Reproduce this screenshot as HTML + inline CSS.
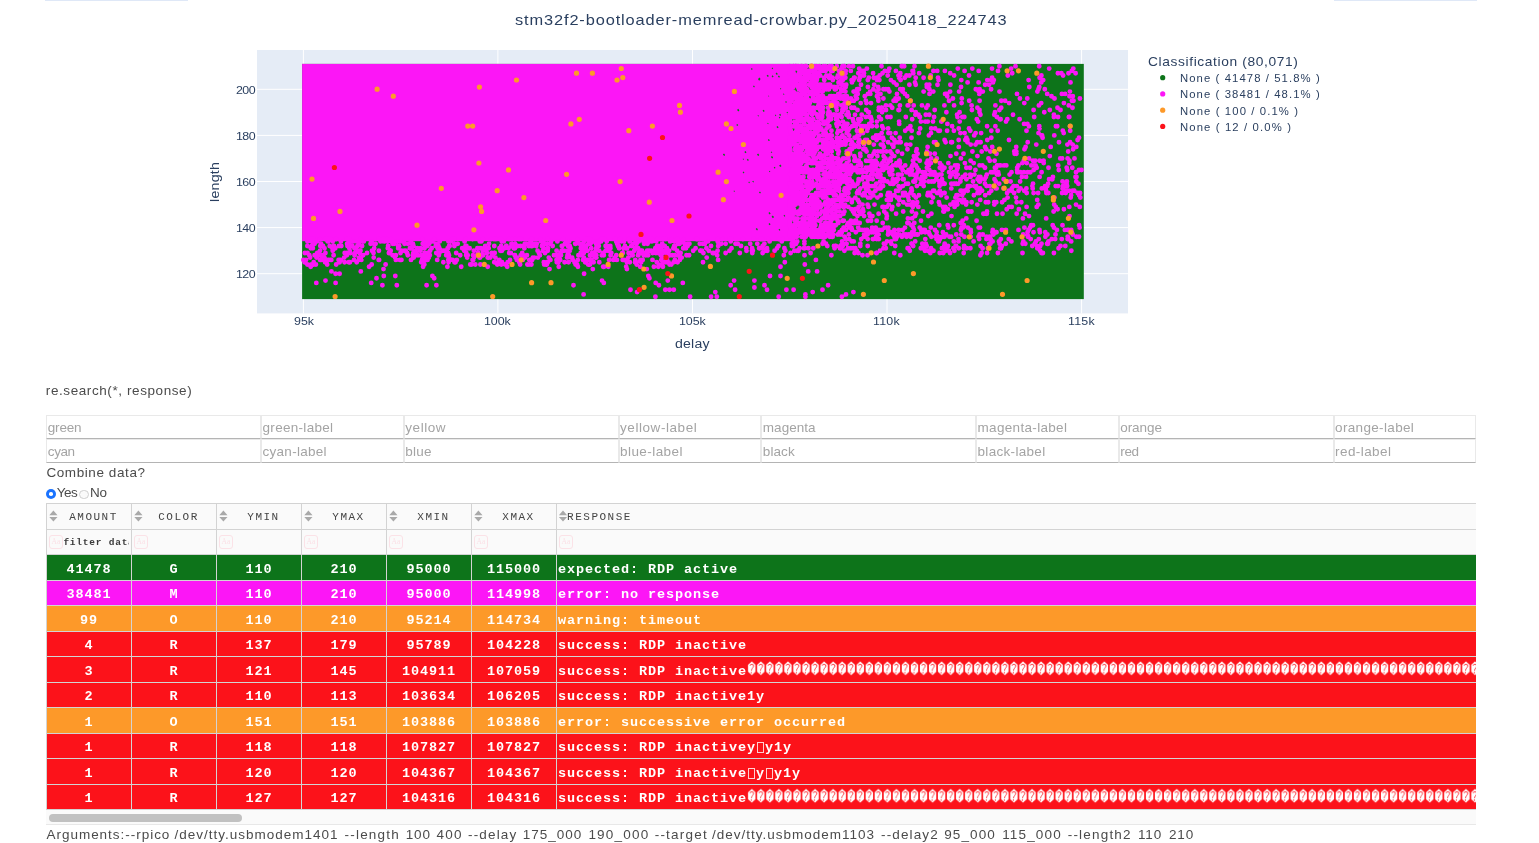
<!DOCTYPE html>
<html><head><meta charset="utf-8"><title>glitch analysis</title>
<style>
html,body{margin:0;padding:0;background:#fff}
body{will-change:transform;width:1539px;height:843px;position:relative;overflow:hidden;font-family:"Liberation Sans",sans-serif}
.abs{position:absolute}
.inp{position:absolute;box-sizing:border-box;background:#fff;border:1px solid #e9e9e9;border-bottom-color:#b4b4b4}
.hl{position:absolute;height:1px;background:#d3d3d3}
.vl{position:absolute;width:1px;background:#d3d3d3}
.c{position:absolute;white-space:pre;color:#fff;font:700 13.5px/15px "Liberation Mono",monospace;letter-spacing:.9px;text-align:center;width:85px}
.r{position:absolute;white-space:pre;color:#fff;font:700 13.5px/15px "Liberation Mono",monospace;letter-spacing:.9px;left:512px}
.h{position:absolute;white-space:pre;color:#444;font:400 11px/12px "Liberation Mono",monospace;letter-spacing:1.5px;text-align:center}
.bx{display:inline-block;box-sizing:border-box;width:6.5px;height:10.5px;border:1px solid rgba(255,255,255,.8);margin:0 1.25px 0 1.25px;vertical-align:-1.5px;letter-spacing:0}
</style></head><body>

<div class="abs" style="left:45px;top:0;width:143px;height:1px;background:#dfe8f7"></div>
<div class="abs" style="left:1334px;top:0;width:143px;height:1px;background:#dfe8f7"></div>
<svg class="abs" style="left:0;top:0" width="1539" height="370" viewBox="0 0 1539 370">
<rect x="257" y="50" width="871" height="263.4" fill="#e5ecf6"/>
<path d="M303.4 50V313.4M497.9 50V313.4M692.5 50V313.4M887.0 50V313.4M1081.6 50V313.4M257 273.7H1128M257 227.6H1128M257 181.5H1128M257 135.4H1128M257 89.3H1128" stroke="#fff" stroke-width="1" fill="none"/>
<rect x="302.1" y="63.9" width="781.7" height="235.2" fill="#0d741a"/>
<rect x="302.1" y="63.9" width="489.9" height="177.3" fill="#fc16f6"/>
<path d="M788.4 114.4m-1.0 0l1.0 -1.0l1.0 1.2l-0.8 1.0zM772.8 216.7m-1.2 0l1.2 -1.2l1.2 1.5l-1.0 1.2zM772.4 68.4m-0.8 0l0.8 -0.8l0.8 0.9l-0.6 0.8zM758.1 154.7m-1.2 0l1.2 -1.2l1.2 1.4l-0.9 1.2zM771.5 152.2m-0.8 0l0.8 -0.8l0.8 0.9l-0.6 0.8zM745.4 152.0m-1.1 0l1.1 -1.1l1.1 1.3l-0.9 1.1zM778.9 76.6m-1.0 0l1.0 -1.0l1.0 1.2l-0.8 1.0zM759.1 79.4m-1.1 0l1.1 -1.1l1.1 1.3l-0.9 1.1zM759.4 78.8m-1.2 0l1.2 -1.2l1.2 1.4l-1.0 1.2zM768.8 140.1m-1.0 0l1.0 -1.0l1.0 1.1l-0.8 1.0zM763.6 110.8m-1.1 0l1.1 -1.1l1.1 1.3l-0.9 1.1zM779.4 229.7m-0.9 0l0.9 -0.9l0.9 1.1l-0.7 0.9zM724.0 154.6m-1.2 0l1.2 -1.2l1.2 1.5l-1.0 1.2zM774.6 167.6m-0.9 0l0.9 -0.9l0.9 1.1l-0.7 0.9zM756.8 229.1m-1.1 0l1.1 -1.1l1.1 1.3l-0.8 1.1zM780.6 88.7m-0.7 0l0.7 -0.7l0.7 0.8l-0.5 0.7zM753.9 86.3m-0.9 0l0.9 -0.9l0.9 1.1l-0.7 0.9zM753.1 181.6m-0.9 0l0.9 -0.9l0.9 1.0l-0.7 0.9zM779.6 117.5m-0.8 0l0.8 -0.8l0.8 1.0l-0.6 0.8zM780.3 165.7m-1.2 0l1.2 -1.2l1.2 1.4l-1.0 1.2zM743.3 159.1m-0.7 0l0.7 -0.7l0.7 0.8l-0.6 0.7zM769.5 213.1m-1.1 0l1.1 -1.1l1.1 1.4l-0.9 1.1zM772.6 76.2m-1.0 0l1.0 -1.0l1.0 1.2l-0.8 1.0zM780.7 195.3m-1.1 0l1.1 -1.1l1.1 1.4l-0.9 1.1zM775.6 115.3m-0.7 0l0.7 -0.7l0.7 0.9l-0.6 0.7zM758.2 115.8m-0.7 0l0.7 -0.7l0.7 0.8l-0.6 0.7zM747.8 159.7m-1.0 0l1.0 -1.0l1.0 1.2l-0.8 1.0zM780.1 114.8m-1.0 0l1.0 -1.0l1.0 1.2l-0.8 1.0zM743.5 172.3m-0.9 0l0.9 -0.9l0.9 1.1l-0.7 0.9zM767.9 123.4m-0.7 0l0.7 -0.7l0.7 0.8l-0.5 0.7zM784.4 215.7m-0.9 0l0.9 -0.9l0.9 1.1l-0.7 0.9zM772.0 157.1m-1.2 0l1.2 -1.2l1.2 1.5l-1.0 1.2zM776.7 73.6m-1.1 0l1.1 -1.1l1.1 1.4l-0.9 1.1zM767.7 75.8m-1.1 0l1.1 -1.1l1.1 1.3l-0.9 1.1zM768.7 96.1m-0.5 0l0.5 -0.5l0.5 0.7l-0.4 0.5zM737.2 124.9m-1.0 0l1.0 -1.0l1.0 1.2l-0.8 1.0zM783.7 94.1m-0.7 0l0.7 -0.7l0.7 0.8l-0.5 0.7zM759.9 192.4m-1.0 0l1.0 -1.0l1.0 1.2l-0.8 1.0zM769.6 171.5m-0.7 0l0.7 -0.7l0.7 0.8l-0.5 0.7zM749.1 182.2m-0.8 0l0.8 -0.8l0.8 1.0l-0.7 0.8zM734.2 191.1m-0.7 0l0.7 -0.7l0.7 0.8l-0.6 0.7zM777.5 127.0m-1.1 0l1.1 -1.1l1.1 1.3l-0.8 1.1zM769.5 224.1m-1.0 0l1.0 -1.0l1.0 1.2l-0.8 1.0zM751.8 68.9m-0.9 0l0.9 -0.9l0.9 1.1l-0.8 0.9zM744.0 143.4m-0.6 0l0.6 -0.6l0.6 0.8l-0.5 0.6zM787.3 112.5m-0.8 0l0.8 -0.8l0.8 1.0l-0.7 0.8zM786.0 101.9m-0.8 0l0.8 -0.8l0.8 1.0l-0.7 0.8zM738.2 110.0m-1.2 0l1.2 -1.2l1.2 1.4l-0.9 1.2z" fill="#0d741a"/>
<path d="M791.6 236.8h0M791.9 236.8h0M790.3 236.8h0M794.8 236.8h0M793.9 236.8h0M796.8 236.8h0M801.5 236.8h0M801.6 236.8h0M803.7 236.8h0M801.8 236.8h0M805.7 236.8h0M811.6 236.8h0M812.1 236.8h0M814.7 236.8h0M817.5 236.8h0M818.5 236.8h0M818.7 236.8h0M817.8 236.8h0M825.4 236.8h0M824.9 236.8h0M821.6 236.8h0M829.8 236.8h0M832.1 236.8h0M832.7 236.8h0M844.6 236.8h0M863.8 236.8h0M876.1 236.8h0M897.1 236.8h0M894.4 236.8h0M902.0 236.8h0M906.6 236.8h0M910.7 236.8h0M931.4 236.8h0M935.8 236.8h0M938.2 236.8h0M942.3 236.8h0M944.5 236.8h0M949.4 236.8h0M951.2 236.8h0M964.4 236.8h0M970.7 236.8h0M978.5 236.8h0M986.7 236.8h0M989.6 236.8h0M1028.3 236.8h0M1027.9 236.8h0M1045.4 236.8h0M1067.7 236.8h0M1076.4 236.8h0M1079.0 236.8h0M791.1 234.5h0M791.9 234.5h0M792.0 234.5h0M789.9 234.5h0M792.1 234.5h0M793.5 234.5h0M795.3 234.5h0M796.9 234.5h0M793.9 234.5h0M796.6 234.5h0M804.3 234.5h0M803.5 234.5h0M805.6 234.5h0M806.8 234.5h0M810.2 234.5h0M816.2 234.5h0M814.3 234.5h0M815.3 234.5h0M816.8 234.5h0M818.8 234.5h0M818.1 234.5h0M819.5 234.5h0M822.2 234.5h0M823.4 234.5h0M822.7 234.5h0M822.4 234.5h0M826.8 234.5h0M828.9 234.5h0M829.7 234.5h0M833.0 234.5h0M840.7 234.5h0M837.6 234.5h0M848.9 234.5h0M864.1 234.5h0M866.3 234.5h0M867.5 234.5h0M866.3 234.5h0M878.6 234.5h0M888.0 234.5h0M892.7 234.5h0M897.3 234.5h0M899.4 234.5h0M903.8 234.5h0M905.1 234.5h0M908.2 234.5h0M906.4 234.5h0M912.4 234.5h0M910.4 234.5h0M916.7 234.5h0M914.8 234.5h0M917.2 234.5h0M917.9 234.5h0M929.7 234.5h0M936.7 234.5h0M946.1 234.5h0M956.3 234.5h0M961.3 234.5h0M979.6 234.5h0M982.8 234.5h0M993.0 234.5h0M993.4 234.5h0M1023.2 234.5h0M1027.5 234.5h0M1047.4 234.5h0M1046.1 234.5h0M1055.5 234.5h0M1072.7 234.5h0M792.0 232.2h0M790.0 232.2h0M795.6 232.2h0M799.7 232.2h0M803.7 232.2h0M802.2 232.2h0M808.1 232.2h0M812.5 232.2h0M812.8 232.2h0M813.2 232.2h0M810.8 232.2h0M817.5 232.2h0M817.1 232.2h0M822.6 232.2h0M831.2 232.2h0M832.3 232.2h0M829.6 232.2h0M839.6 232.2h0M840.6 232.2h0M839.6 232.2h0M841.8 232.2h0M855.8 232.2h0M869.8 232.2h0M873.4 232.2h0M871.4 232.2h0M875.4 232.2h0M888.4 232.2h0M891.4 232.2h0M894.3 232.2h0M913.0 232.2h0M912.1 232.2h0M921.5 232.2h0M925.2 232.2h0M928.8 232.2h0M936.6 232.2h0M936.6 232.2h0M942.9 232.2h0M970.9 232.2h0M992.4 232.2h0M996.0 232.2h0M996.5 232.2h0M1027.6 232.2h0M1033.5 232.2h0M1039.9 232.2h0M1045.3 232.2h0M1071.7 232.2h0M792.4 229.9h0M790.7 229.9h0M798.2 229.9h0M805.5 229.9h0M805.3 229.9h0M801.8 229.9h0M805.2 229.9h0M807.6 229.9h0M809.3 229.9h0M808.4 229.9h0M812.0 229.9h0M811.4 229.9h0M810.4 229.9h0M809.8 229.9h0M815.3 229.9h0M819.9 229.9h0M819.2 229.9h0M822.0 229.9h0M825.1 229.9h0M824.7 229.9h0M824.0 229.9h0M823.0 229.9h0M827.8 229.9h0M830.5 229.9h0M833.5 229.9h0M833.2 229.9h0M833.8 229.9h0M842.0 229.9h0M845.9 229.9h0M852.1 229.9h0M858.9 229.9h0M862.0 229.9h0M864.8 229.9h0M867.2 229.9h0M866.6 229.9h0M872.2 229.9h0M875.7 229.9h0M879.0 229.9h0M877.9 229.9h0M881.9 229.9h0M888.3 229.9h0M894.4 229.9h0M898.8 229.9h0M902.7 229.9h0M914.0 229.9h0M921.2 229.9h0M924.8 229.9h0M922.8 229.9h0M935.0 229.9h0M935.0 229.9h0M960.9 229.9h0M970.7 229.9h0M992.8 229.9h0M1001.9 229.9h0M1005.9 229.9h0M1018.5 229.9h0M1028.6 229.9h0M1039.5 229.9h0M1056.9 229.9h0M1064.9 229.9h0M1067.6 229.9h0M1068.4 229.9h0M1071.2 229.9h0M790.7 227.6h0M794.8 227.6h0M801.8 227.6h0M803.4 227.6h0M806.0 227.6h0M806.3 227.6h0M812.4 227.6h0M814.3 227.6h0M820.6 227.6h0M824.8 227.6h0M829.1 227.6h0M833.4 227.6h0M831.5 227.6h0M843.7 227.6h0M843.6 227.6h0M849.6 227.6h0M851.4 227.6h0M858.2 227.6h0M858.2 227.6h0M872.1 227.6h0M875.7 227.6h0M884.8 227.6h0M886.6 227.6h0M888.4 227.6h0M905.0 227.6h0M913.2 227.6h0M919.7 227.6h0M930.8 227.6h0M948.3 227.6h0M961.6 227.6h0M963.1 227.6h0M967.8 227.6h0M980.0 227.6h0M978.7 227.6h0M1024.4 227.6h0M1030.1 227.6h0M1053.9 227.6h0M1079.6 227.6h0M791.2 225.3h0M789.6 225.3h0M791.2 225.3h0M794.9 225.3h0M794.9 225.3h0M796.2 225.3h0M794.0 225.3h0M795.1 225.3h0M800.6 225.3h0M801.2 225.3h0M799.7 225.3h0M799.0 225.3h0M804.4 225.3h0M809.3 225.3h0M808.1 225.3h0M806.3 225.3h0M805.9 225.3h0M812.3 225.3h0M815.4 225.3h0M814.0 225.3h0M821.2 225.3h0M822.6 225.3h0M825.2 225.3h0M828.8 225.3h0M826.7 225.3h0M829.1 225.3h0M835.7 225.3h0M833.9 225.3h0M848.2 225.3h0M848.5 225.3h0M847.1 225.3h0M849.6 225.3h0M911.4 225.3h0M939.2 225.3h0M939.3 225.3h0M947.7 225.3h0M953.8 225.3h0M963.9 225.3h0M1033.0 225.3h0M1031.2 225.3h0M1052.7 225.3h0M1062.5 225.3h0M1079.1 225.3h0M789.7 223.0h0M797.3 223.0h0M797.5 223.0h0M798.7 223.0h0M804.9 223.0h0M803.0 223.0h0M809.1 223.0h0M810.3 223.0h0M813.1 223.0h0M825.2 223.0h0M828.3 223.0h0M829.3 223.0h0M830.4 223.0h0M838.3 223.0h0M848.2 223.0h0M849.1 223.0h0M850.8 223.0h0M856.1 223.0h0M853.9 223.0h0M859.7 223.0h0M882.7 223.0h0M907.4 223.0h0M908.6 223.0h0M914.3 223.0h0M960.7 223.0h0M789.7 220.7h0M794.6 220.7h0M795.9 220.7h0M802.6 220.7h0M811.2 220.7h0M811.0 220.7h0M810.4 220.7h0M815.5 220.7h0M819.4 220.7h0M820.5 220.7h0M831.1 220.7h0M837.7 220.7h0M842.6 220.7h0M843.8 220.7h0M842.5 220.7h0M850.9 220.7h0M855.2 220.7h0M856.1 220.7h0M867.9 220.7h0M871.1 220.7h0M876.7 220.7h0M921.0 220.7h0M962.6 220.7h0M976.6 220.7h0M791.1 218.4h0M793.0 218.4h0M794.9 218.4h0M797.6 218.4h0M804.2 218.4h0M805.2 218.4h0M802.4 218.4h0M804.3 218.4h0M808.1 218.4h0M805.9 218.4h0M807.3 218.4h0M811.1 218.4h0M814.7 218.4h0M822.2 218.4h0M825.9 218.4h0M830.2 218.4h0M836.4 218.4h0M833.6 218.4h0M886.6 218.4h0M907.9 218.4h0M912.1 218.4h0M966.3 218.4h0M1022.9 218.4h0M1046.2 218.4h0M791.6 216.1h0M811.4 216.1h0M817.0 216.1h0M817.0 216.1h0M824.7 216.1h0M828.4 216.1h0M826.9 216.1h0M832.9 216.1h0M836.4 216.1h0M836.0 216.1h0M839.1 216.1h0M840.2 216.1h0M857.4 216.1h0M864.1 216.1h0M872.4 216.1h0M870.0 216.1h0M886.9 216.1h0M915.1 216.1h0M928.3 216.1h0M951.5 216.1h0M1029.0 216.1h0M1069.5 216.1h0M793.8 213.8h0M799.6 213.8h0M797.6 213.8h0M803.7 213.8h0M804.8 213.8h0M808.6 213.8h0M809.5 213.8h0M806.0 213.8h0M809.4 213.8h0M813.2 213.8h0M809.6 213.8h0M815.1 213.8h0M819.0 213.8h0M820.1 213.8h0M825.2 213.8h0M826.9 213.8h0M832.5 213.8h0M834.0 213.8h0M834.1 213.8h0M843.6 213.8h0M854.4 213.8h0M860.6 213.8h0M869.4 213.8h0M878.6 213.8h0M886.3 213.8h0M896.1 213.8h0M916.1 213.8h0M931.4 213.8h0M983.4 213.8h0M986.8 213.8h0M997.0 213.8h0M1002.5 213.8h0M1016.7 213.8h0M1025.0 213.8h0M791.0 211.5h0M790.0 211.5h0M789.7 211.5h0M790.9 211.5h0M793.0 211.5h0M794.3 211.5h0M801.5 211.5h0M798.4 211.5h0M800.1 211.5h0M801.1 211.5h0M804.2 211.5h0M806.9 211.5h0M812.0 211.5h0M812.3 211.5h0M822.0 211.5h0M825.3 211.5h0M826.3 211.5h0M830.8 211.5h0M831.2 211.5h0M830.1 211.5h0M836.8 211.5h0M839.6 211.5h0M844.4 211.5h0M853.0 211.5h0M861.3 211.5h0M859.1 211.5h0M863.3 211.5h0M884.3 211.5h0M903.2 211.5h0M911.9 211.5h0M923.0 211.5h0M944.1 211.5h0M943.4 211.5h0M968.9 211.5h0M968.1 211.5h0M968.4 211.5h0M971.4 211.5h0M987.0 211.5h0M1053.6 211.5h0M793.9 209.2h0M800.7 209.2h0M801.8 209.2h0M807.8 209.2h0M813.0 209.2h0M810.2 209.2h0M817.0 209.2h0M817.4 209.2h0M815.2 209.2h0M827.7 209.2h0M825.7 209.2h0M826.0 209.2h0M832.1 209.2h0M835.2 209.2h0M851.5 209.2h0M855.6 209.2h0M857.2 209.2h0M855.1 209.2h0M863.0 209.2h0M891.7 209.2h0M943.9 209.2h0M947.9 209.2h0M1006.7 209.2h0M1018.9 209.2h0M1057.6 209.2h0M1063.9 209.2h0M790.0 206.9h0M790.8 206.9h0M792.5 206.9h0M802.0 206.9h0M802.8 206.9h0M805.4 206.9h0M807.2 206.9h0M807.7 206.9h0M813.0 206.9h0M815.3 206.9h0M820.3 206.9h0M819.1 206.9h0M820.7 206.9h0M827.9 206.9h0M834.9 206.9h0M839.1 206.9h0M843.9 206.9h0M843.5 206.9h0M848.3 206.9h0M858.6 206.9h0M868.4 206.9h0M883.5 206.9h0M882.5 206.9h0M886.8 206.9h0M892.3 206.9h0M912.8 206.9h0M918.3 206.9h0M943.0 206.9h0M945.4 206.9h0M954.6 206.9h0M1009.0 206.9h0M1011.7 206.9h0M1026.6 206.9h0M1036.7 206.9h0M1055.8 206.9h0M1069.3 206.9h0M1079.8 206.9h0M792.2 204.6h0M789.8 204.6h0M789.7 204.6h0M793.9 204.6h0M795.7 204.6h0M794.3 204.6h0M795.7 204.6h0M795.0 204.6h0M800.4 204.6h0M803.5 204.6h0M803.8 204.6h0M806.8 204.6h0M806.9 204.6h0M811.5 204.6h0M811.9 204.6h0M812.3 204.6h0M812.0 204.6h0M812.0 204.6h0M813.3 204.6h0M809.9 204.6h0M814.0 204.6h0M817.0 204.6h0M817.7 204.6h0M824.6 204.6h0M824.8 204.6h0M821.6 204.6h0M830.9 204.6h0M830.9 204.6h0M829.6 204.6h0M835.9 204.6h0M840.2 204.6h0M845.1 204.6h0M862.5 204.6h0M867.6 204.6h0M874.5 204.6h0M888.7 204.6h0M898.4 204.6h0M907.0 204.6h0M910.1 204.6h0M912.7 204.6h0M916.7 204.6h0M939.5 204.6h0M950.4 204.6h0M954.9 204.6h0M957.3 204.6h0M966.1 204.6h0M977.3 204.6h0M994.3 204.6h0M1038.4 204.6h0M1054.2 204.6h0M1076.0 204.6h0M792.6 202.2h0M791.2 202.2h0M789.8 202.2h0M796.5 202.2h0M798.4 202.2h0M802.3 202.2h0M801.6 202.2h0M802.8 202.2h0M811.0 202.2h0M815.0 202.2h0M817.1 202.2h0M819.4 202.2h0M818.9 202.2h0M825.3 202.2h0M827.6 202.2h0M829.5 202.2h0M832.4 202.2h0M841.3 202.2h0M851.8 202.2h0M859.1 202.2h0M903.3 202.2h0M912.9 202.2h0M917.2 202.2h0M931.5 202.2h0M938.9 202.2h0M953.5 202.2h0M956.7 202.2h0M962.3 202.2h0M966.5 202.2h0M971.6 202.2h0M985.8 202.2h0M988.2 202.2h0M994.3 202.2h0M996.3 202.2h0M1002.1 202.2h0M1016.7 202.2h0M1021.3 202.2h0M793.4 199.9h0M792.0 199.9h0M793.4 199.9h0M792.6 199.9h0M790.9 199.9h0M793.7 199.9h0M797.0 199.9h0M798.3 199.9h0M799.9 199.9h0M798.5 199.9h0M801.8 199.9h0M807.2 199.9h0M807.2 199.9h0M806.5 199.9h0M811.3 199.9h0M812.3 199.9h0M815.7 199.9h0M817.5 199.9h0M815.7 199.9h0M814.3 199.9h0M816.6 199.9h0M828.4 199.9h0M832.6 199.9h0M835.3 199.9h0M834.0 199.9h0M837.8 199.9h0M838.6 199.9h0M840.3 199.9h0M843.3 199.9h0M847.2 199.9h0M852.0 199.9h0M857.8 199.9h0M887.9 199.9h0M886.8 199.9h0M890.8 199.9h0M899.2 199.9h0M908.7 199.9h0M959.1 199.9h0M963.2 199.9h0M964.2 199.9h0M980.2 199.9h0M1004.4 199.9h0M1037.2 199.9h0M792.7 197.6h0M790.8 197.6h0M792.5 197.6h0M795.5 197.6h0M794.2 197.6h0M796.1 197.6h0M799.2 197.6h0M798.1 197.6h0M800.0 197.6h0M805.4 197.6h0M803.0 197.6h0M804.6 197.6h0M812.9 197.6h0M811.1 197.6h0M815.7 197.6h0M822.8 197.6h0M825.0 197.6h0M826.3 197.6h0M839.5 197.6h0M840.3 197.6h0M848.4 197.6h0M848.3 197.6h0M855.4 197.6h0M868.0 197.6h0M870.4 197.6h0M877.4 197.6h0M890.2 197.6h0M891.0 197.6h0M897.1 197.6h0M899.0 197.6h0M908.3 197.6h0M915.9 197.6h0M933.0 197.6h0M946.6 197.6h0M955.4 197.6h0M1007.6 197.6h0M1016.0 197.6h0M1054.4 197.6h0M1070.7 197.6h0M1080.3 197.6h0M793.1 195.3h0M793.5 195.3h0M793.2 195.3h0M794.5 195.3h0M801.0 195.3h0M799.6 195.3h0M801.5 195.3h0M806.1 195.3h0M811.8 195.3h0M813.3 195.3h0M815.9 195.3h0M814.2 195.3h0M819.3 195.3h0M819.7 195.3h0M818.9 195.3h0M822.4 195.3h0M824.2 195.3h0M835.8 195.3h0M834.0 195.3h0M840.8 195.3h0M841.7 195.3h0M844.7 195.3h0M862.6 195.3h0M864.9 195.3h0M873.3 195.3h0M880.8 195.3h0M887.5 195.3h0M890.7 195.3h0M894.3 195.3h0M894.5 195.3h0M904.1 195.3h0M903.1 195.3h0M904.4 195.3h0M907.5 195.3h0M913.7 195.3h0M918.9 195.3h0M927.6 195.3h0M927.5 195.3h0M930.5 195.3h0M941.0 195.3h0M956.5 195.3h0M957.8 195.3h0M962.2 195.3h0M973.9 195.3h0M985.2 195.3h0M1071.1 195.3h0M1079.1 195.3h0M790.7 193.0h0M797.2 193.0h0M794.3 193.0h0M795.1 193.0h0M801.5 193.0h0M800.5 193.0h0M803.9 193.0h0M805.1 193.0h0M805.5 193.0h0M804.9 193.0h0M807.2 193.0h0M807.8 193.0h0M816.1 193.0h0M820.0 193.0h0M827.0 193.0h0M828.3 193.0h0M826.3 193.0h0M831.8 193.0h0M833.6 193.0h0M845.5 193.0h0M848.4 193.0h0M857.0 193.0h0M859.1 193.0h0M858.8 193.0h0M864.3 193.0h0M872.0 193.0h0M870.2 193.0h0M888.2 193.0h0M889.9 193.0h0M905.0 193.0h0M903.0 193.0h0M910.5 193.0h0M928.0 193.0h0M930.0 193.0h0M937.1 193.0h0M941.0 193.0h0M944.6 193.0h0M944.1 193.0h0M963.6 193.0h0M977.5 193.0h0M979.4 193.0h0M989.2 193.0h0M1007.1 193.0h0M1014.1 193.0h0M1026.7 193.0h0M1033.6 193.0h0M1038.1 193.0h0M1048.3 193.0h0M1046.4 193.0h0M1062.1 193.0h0M1065.7 193.0h0M1077.7 193.0h0M1080.0 193.0h0M792.1 190.7h0M789.8 190.7h0M797.2 190.7h0M796.7 190.7h0M793.7 190.7h0M795.6 190.7h0M803.8 190.7h0M802.8 190.7h0M802.2 190.7h0M808.3 190.7h0M808.5 190.7h0M807.4 190.7h0M823.0 190.7h0M822.3 190.7h0M825.4 190.7h0M828.4 190.7h0M833.1 190.7h0M833.4 190.7h0M831.2 190.7h0M835.2 190.7h0M839.0 190.7h0M844.3 190.7h0M844.9 190.7h0M846.6 190.7h0M859.1 190.7h0M858.0 190.7h0M866.6 190.7h0M868.6 190.7h0M875.4 190.7h0M896.1 190.7h0M898.3 190.7h0M911.4 190.7h0M911.9 190.7h0M933.2 190.7h0M934.1 190.7h0M939.8 190.7h0M961.4 190.7h0M960.6 190.7h0M964.7 190.7h0M967.7 190.7h0M979.8 190.7h0M982.1 190.7h0M981.7 190.7h0M991.3 190.7h0M1008.9 190.7h0M1011.7 190.7h0M1018.6 190.7h0M1024.2 190.7h0M1046.1 190.7h0M1066.2 190.7h0M1068.9 190.7h0M1072.6 190.7h0M1074.0 190.7h0M1074.2 190.7h0M792.7 188.4h0M791.3 188.4h0M795.4 188.4h0M796.3 188.4h0M798.1 188.4h0M797.7 188.4h0M801.7 188.4h0M810.8 188.4h0M811.0 188.4h0M810.8 188.4h0M818.3 188.4h0M818.0 188.4h0M828.4 188.4h0M830.3 188.4h0M836.5 188.4h0M839.0 188.4h0M844.8 188.4h0M845.2 188.4h0M849.5 188.4h0M846.4 188.4h0M848.8 188.4h0M860.3 188.4h0M865.8 188.4h0M866.7 188.4h0M878.5 188.4h0M880.5 188.4h0M878.9 188.4h0M899.8 188.4h0M911.5 188.4h0M951.3 188.4h0M967.5 188.4h0M976.7 188.4h0M980.2 188.4h0M979.4 188.4h0M996.6 188.4h0M996.0 188.4h0M1003.5 188.4h0M1011.8 188.4h0M1020.5 188.4h0M1026.4 188.4h0M1032.7 188.4h0M1041.8 188.4h0M1045.7 188.4h0M1063.3 188.4h0M1062.6 188.4h0M790.5 186.1h0M791.4 186.1h0M792.1 186.1h0M792.0 186.1h0M790.9 186.1h0M793.5 186.1h0M793.9 186.1h0M797.7 186.1h0M798.5 186.1h0M802.0 186.1h0M805.4 186.1h0M805.4 186.1h0M806.6 186.1h0M807.7 186.1h0M808.2 186.1h0M806.8 186.1h0M813.4 186.1h0M817.4 186.1h0M820.5 186.1h0M820.9 186.1h0M820.9 186.1h0M817.7 186.1h0M817.8 186.1h0M820.5 186.1h0M824.3 186.1h0M824.2 186.1h0M824.3 186.1h0M825.8 186.1h0M830.4 186.1h0M831.4 186.1h0M832.3 186.1h0M833.6 186.1h0M838.5 186.1h0M849.2 186.1h0M853.0 186.1h0M855.0 186.1h0M854.9 186.1h0M864.3 186.1h0M868.8 186.1h0M869.4 186.1h0M869.6 186.1h0M872.0 186.1h0M875.0 186.1h0M873.6 186.1h0M881.0 186.1h0M880.6 186.1h0M881.5 186.1h0M883.1 186.1h0M898.6 186.1h0M902.8 186.1h0M916.8 186.1h0M923.7 186.1h0M939.5 186.1h0M967.9 186.1h0M969.0 186.1h0M970.1 186.1h0M974.2 186.1h0M975.8 186.1h0M976.0 186.1h0M986.6 186.1h0M989.8 186.1h0M994.4 186.1h0M1013.5 186.1h0M1016.8 186.1h0M1013.9 186.1h0M1032.4 186.1h0M1045.1 186.1h0M1047.3 186.1h0M1055.7 186.1h0M1058.0 186.1h0M1062.9 186.1h0M1067.2 186.1h0M789.6 183.8h0M794.2 183.8h0M793.7 183.8h0M796.0 183.8h0M796.0 183.8h0M798.4 183.8h0M798.1 183.8h0M809.4 183.8h0M806.8 183.8h0M809.7 183.8h0M812.0 183.8h0M816.4 183.8h0M820.9 183.8h0M822.2 183.8h0M827.0 183.8h0M829.2 183.8h0M825.8 183.8h0M826.7 183.8h0M835.0 183.8h0M834.4 183.8h0M840.2 183.8h0M847.3 183.8h0M852.8 183.8h0M857.6 183.8h0M864.4 183.8h0M866.3 183.8h0M867.5 183.8h0M876.3 183.8h0M893.5 183.8h0M890.2 183.8h0M892.5 183.8h0M893.6 183.8h0M906.0 183.8h0M908.1 183.8h0M920.8 183.8h0M922.8 183.8h0M939.5 183.8h0M941.2 183.8h0M942.9 183.8h0M941.8 183.8h0M944.6 183.8h0M951.3 183.8h0M954.6 183.8h0M956.0 183.8h0M953.8 183.8h0M956.3 183.8h0M958.1 183.8h0M985.0 183.8h0M999.2 183.8h0M1033.0 183.8h0M1048.1 183.8h0M1066.6 183.8h0M1065.7 183.8h0M1078.4 183.8h0M793.6 181.5h0M795.9 181.5h0M801.2 181.5h0M802.7 181.5h0M804.6 181.5h0M809.1 181.5h0M806.9 181.5h0M812.1 181.5h0M810.8 181.5h0M822.0 181.5h0M828.6 181.5h0M833.3 181.5h0M835.9 181.5h0M834.8 181.5h0M835.1 181.5h0M835.8 181.5h0M834.5 181.5h0M837.7 181.5h0M839.0 181.5h0M839.3 181.5h0M844.0 181.5h0M843.8 181.5h0M846.5 181.5h0M846.0 181.5h0M851.8 181.5h0M851.6 181.5h0M851.4 181.5h0M858.5 181.5h0M880.1 181.5h0M883.5 181.5h0M887.4 181.5h0M892.5 181.5h0M895.7 181.5h0M896.6 181.5h0M913.4 181.5h0M913.5 181.5h0M915.1 181.5h0M913.9 181.5h0M924.0 181.5h0M928.5 181.5h0M931.7 181.5h0M933.9 181.5h0M939.3 181.5h0M942.2 181.5h0M960.4 181.5h0M973.0 181.5h0M980.1 181.5h0M979.4 181.5h0M995.7 181.5h0M1006.8 181.5h0M1010.6 181.5h0M1020.1 181.5h0M1062.5 181.5h0M1066.9 181.5h0M1076.3 181.5h0M791.6 179.2h0M791.7 179.2h0M797.5 179.2h0M793.6 179.2h0M793.8 179.2h0M798.3 179.2h0M799.5 179.2h0M802.2 179.2h0M817.4 179.2h0M818.5 179.2h0M819.0 179.2h0M819.5 179.2h0M818.0 179.2h0M823.5 179.2h0M824.8 179.2h0M825.9 179.2h0M840.3 179.2h0M839.9 179.2h0M845.5 179.2h0M843.4 179.2h0M845.9 179.2h0M849.7 179.2h0M858.6 179.2h0M862.1 179.2h0M867.7 179.2h0M868.4 179.2h0M868.9 179.2h0M872.7 179.2h0M883.8 179.2h0M892.8 179.2h0M896.6 179.2h0M898.0 179.2h0M902.8 179.2h0M903.7 179.2h0M915.5 179.2h0M920.5 179.2h0M936.3 179.2h0M942.0 179.2h0M960.5 179.2h0M966.4 179.2h0M977.6 179.2h0M980.5 179.2h0M984.6 179.2h0M994.5 179.2h0M1003.7 179.2h0M1049.1 179.2h0M1052.3 179.2h0M1051.8 179.2h0M792.3 176.9h0M795.3 176.9h0M795.3 176.9h0M799.3 176.9h0M800.2 176.9h0M798.8 176.9h0M800.9 176.9h0M799.2 176.9h0M799.8 176.9h0M802.7 176.9h0M803.5 176.9h0M809.2 176.9h0M813.1 176.9h0M809.8 176.9h0M810.7 176.9h0M815.6 176.9h0M813.9 176.9h0M815.1 176.9h0M815.5 176.9h0M818.1 176.9h0M818.6 176.9h0M827.2 176.9h0M829.3 176.9h0M830.7 176.9h0M831.8 176.9h0M831.9 176.9h0M837.3 176.9h0M835.4 176.9h0M842.6 176.9h0M843.4 176.9h0M843.4 176.9h0M846.1 176.9h0M863.2 176.9h0M866.7 176.9h0M869.1 176.9h0M877.4 176.9h0M880.5 176.9h0M916.4 176.9h0M925.3 176.9h0M923.2 176.9h0M923.9 176.9h0M921.8 176.9h0M936.6 176.9h0M950.1 176.9h0M956.0 176.9h0M962.6 176.9h0M970.5 176.9h0M978.9 176.9h0M980.4 176.9h0M985.9 176.9h0M1021.9 176.9h0M1026.1 176.9h0M1039.6 176.9h0M1052.9 176.9h0M1076.5 176.9h0M1076.0 176.9h0M1075.5 176.9h0M790.7 174.6h0M790.0 174.6h0M796.7 174.6h0M795.6 174.6h0M797.6 174.6h0M810.0 174.6h0M811.3 174.6h0M812.0 174.6h0M811.2 174.6h0M812.2 174.6h0M815.5 174.6h0M815.3 174.6h0M818.5 174.6h0M823.5 174.6h0M827.1 174.6h0M828.6 174.6h0M825.7 174.6h0M827.4 174.6h0M826.6 174.6h0M832.3 174.6h0M829.9 174.6h0M832.2 174.6h0M835.2 174.6h0M834.3 174.6h0M834.3 174.6h0M840.0 174.6h0M840.9 174.6h0M845.4 174.6h0M850.2 174.6h0M873.4 174.6h0M871.2 174.6h0M876.1 174.6h0M880.5 174.6h0M890.0 174.6h0M892.5 174.6h0M897.9 174.6h0M899.0 174.6h0M901.7 174.6h0M909.9 174.6h0M912.9 174.6h0M916.6 174.6h0M913.6 174.6h0M926.2 174.6h0M929.9 174.6h0M933.0 174.6h0M933.9 174.6h0M936.5 174.6h0M939.6 174.6h0M941.5 174.6h0M951.9 174.6h0M957.1 174.6h0M957.7 174.6h0M965.4 174.6h0M970.2 174.6h0M974.4 174.6h0M986.8 174.6h0M996.9 174.6h0M998.7 174.6h0M1009.6 174.6h0M791.9 172.3h0M792.5 172.3h0M794.6 172.3h0M796.1 172.3h0M794.1 172.3h0M794.3 172.3h0M793.9 172.3h0M798.9 172.3h0M798.8 172.3h0M797.8 172.3h0M798.0 172.3h0M805.5 172.3h0M803.1 172.3h0M807.4 172.3h0M808.1 172.3h0M805.6 172.3h0M809.9 172.3h0M809.9 172.3h0M812.7 172.3h0M816.7 172.3h0M815.6 172.3h0M816.7 172.3h0M818.1 172.3h0M817.9 172.3h0M825.4 172.3h0M830.0 172.3h0M835.9 172.3h0M838.9 172.3h0M848.0 172.3h0M851.2 172.3h0M859.4 172.3h0M857.6 172.3h0M862.1 172.3h0M866.4 172.3h0M872.4 172.3h0M878.2 172.3h0M889.2 172.3h0M906.3 172.3h0M910.1 172.3h0M917.7 172.3h0M925.0 172.3h0M922.4 172.3h0M932.1 172.3h0M934.5 172.3h0M949.1 172.3h0M953.4 172.3h0M955.1 172.3h0M992.8 172.3h0M991.0 172.3h0M995.0 172.3h0M998.2 172.3h0M1011.5 172.3h0M1017.2 172.3h0M1020.5 172.3h0M1023.9 172.3h0M1027.7 172.3h0M1030.3 172.3h0M1041.6 172.3h0M1076.0 172.3h0M792.8 170.0h0M792.2 170.0h0M792.8 170.0h0M793.5 170.0h0M800.8 170.0h0M805.1 170.0h0M804.4 170.0h0M809.4 170.0h0M806.7 170.0h0M808.0 170.0h0M813.2 170.0h0M812.7 170.0h0M816.1 170.0h0M818.0 170.0h0M818.2 170.0h0M818.6 170.0h0M822.1 170.0h0M831.6 170.0h0M833.5 170.0h0M836.8 170.0h0M843.5 170.0h0M845.3 170.0h0M841.8 170.0h0M850.3 170.0h0M851.4 170.0h0M853.8 170.0h0M854.3 170.0h0M857.9 170.0h0M858.8 170.0h0M862.2 170.0h0M873.2 170.0h0M870.1 170.0h0M876.9 170.0h0M881.2 170.0h0M883.3 170.0h0M892.3 170.0h0M902.6 170.0h0M908.6 170.0h0M912.0 170.0h0M918.7 170.0h0M929.3 170.0h0M942.4 170.0h0M956.8 170.0h0M975.4 170.0h0M1017.1 170.0h0M1033.6 170.0h0M1033.7 170.0h0M1058.8 170.0h0M1067.3 170.0h0M1079.0 170.0h0M1081.5 170.0h0M797.5 167.7h0M796.0 167.7h0M793.7 167.7h0M794.4 167.7h0M797.4 167.7h0M801.3 167.7h0M798.7 167.7h0M800.6 167.7h0M805.2 167.7h0M804.9 167.7h0M806.9 167.7h0M806.8 167.7h0M817.4 167.7h0M818.6 167.7h0M820.6 167.7h0M823.3 167.7h0M827.1 167.7h0M833.5 167.7h0M830.6 167.7h0M837.2 167.7h0M840.8 167.7h0M845.1 167.7h0M848.4 167.7h0M847.8 167.7h0M852.8 167.7h0M855.8 167.7h0M856.4 167.7h0M867.3 167.7h0M868.8 167.7h0M865.9 167.7h0M873.4 167.7h0M872.1 167.7h0M875.2 167.7h0M885.5 167.7h0M885.9 167.7h0M887.2 167.7h0M887.5 167.7h0M886.0 167.7h0M890.5 167.7h0M901.3 167.7h0M902.2 167.7h0M911.5 167.7h0M917.2 167.7h0M926.9 167.7h0M939.8 167.7h0M944.5 167.7h0M950.8 167.7h0M957.7 167.7h0M966.4 167.7h0M970.0 167.7h0M985.0 167.7h0M984.9 167.7h0M996.1 167.7h0M994.9 167.7h0M1017.2 167.7h0M1036.7 167.7h0M1048.5 167.7h0M1066.7 167.7h0M1072.3 167.7h0M790.5 165.4h0M794.0 165.4h0M799.6 165.4h0M797.6 165.4h0M799.6 165.4h0M797.7 165.4h0M798.0 165.4h0M806.4 165.4h0M818.4 165.4h0M821.1 165.4h0M817.6 165.4h0M828.5 165.4h0M829.3 165.4h0M829.1 165.4h0M829.4 165.4h0M831.8 165.4h0M833.3 165.4h0M831.8 165.4h0M839.5 165.4h0M841.3 165.4h0M844.4 165.4h0M849.3 165.4h0M850.8 165.4h0M850.8 165.4h0M861.2 165.4h0M858.0 165.4h0M872.5 165.4h0M872.8 165.4h0M871.6 165.4h0M872.3 165.4h0M873.7 165.4h0M876.4 165.4h0M881.0 165.4h0M882.2 165.4h0M886.2 165.4h0M892.9 165.4h0M896.4 165.4h0M899.2 165.4h0M898.5 165.4h0M905.2 165.4h0M912.4 165.4h0M915.9 165.4h0M928.8 165.4h0M941.6 165.4h0M956.5 165.4h0M955.0 165.4h0M957.8 165.4h0M979.6 165.4h0M982.3 165.4h0M997.1 165.4h0M1000.5 165.4h0M999.6 165.4h0M1004.1 165.4h0M1006.3 165.4h0M1018.4 165.4h0M1031.3 165.4h0M1035.6 165.4h0M1034.1 165.4h0M1058.2 165.4h0M791.5 163.1h0M790.6 163.1h0M795.6 163.1h0M794.0 163.1h0M796.5 163.1h0M794.3 163.1h0M795.1 163.1h0M799.7 163.1h0M801.4 163.1h0M807.8 163.1h0M811.0 163.1h0M812.5 163.1h0M811.8 163.1h0M813.8 163.1h0M815.7 163.1h0M818.7 163.1h0M818.2 163.1h0M819.3 163.1h0M820.9 163.1h0M823.2 163.1h0M825.2 163.1h0M824.9 163.1h0M822.3 163.1h0M828.5 163.1h0M827.2 163.1h0M833.2 163.1h0M833.1 163.1h0M836.4 163.1h0M839.6 163.1h0M846.7 163.1h0M860.1 163.1h0M860.6 163.1h0M872.6 163.1h0M877.2 163.1h0M874.4 163.1h0M882.3 163.1h0M887.7 163.1h0M896.4 163.1h0M900.1 163.1h0M898.0 163.1h0M913.4 163.1h0M926.6 163.1h0M930.9 163.1h0M939.9 163.1h0M948.3 163.1h0M964.9 163.1h0M973.7 163.1h0M1022.4 163.1h0M1026.8 163.1h0M1043.7 163.1h0M1069.3 163.1h0M791.1 160.8h0M792.3 160.8h0M792.9 160.8h0M796.4 160.8h0M795.6 160.8h0M794.0 160.8h0M797.7 160.8h0M799.5 160.8h0M798.8 160.8h0M799.6 160.8h0M804.6 160.8h0M804.2 160.8h0M806.5 160.8h0M811.6 160.8h0M814.7 160.8h0M815.6 160.8h0M823.9 160.8h0M829.5 160.8h0M830.0 160.8h0M841.1 160.8h0M838.2 160.8h0M848.7 160.8h0M855.8 160.8h0M854.4 160.8h0M858.9 160.8h0M858.8 160.8h0M866.1 160.8h0M869.6 160.8h0M872.0 160.8h0M875.6 160.8h0M883.9 160.8h0M889.1 160.8h0M890.8 160.8h0M899.6 160.8h0M899.3 160.8h0M912.9 160.8h0M919.7 160.8h0M927.7 160.8h0M970.6 160.8h0M989.8 160.8h0M994.6 160.8h0M1023.8 160.8h0M1033.0 160.8h0M1035.2 160.8h0M1039.7 160.8h0M1043.6 160.8h0M1069.4 160.8h0M790.4 158.4h0M795.7 158.4h0M794.3 158.4h0M799.1 158.4h0M797.6 158.4h0M805.3 158.4h0M802.6 158.4h0M804.2 158.4h0M806.5 158.4h0M808.5 158.4h0M814.2 158.4h0M816.2 158.4h0M820.9 158.4h0M820.9 158.4h0M826.0 158.4h0M829.8 158.4h0M833.4 158.4h0M836.2 158.4h0M835.4 158.4h0M838.2 158.4h0M844.5 158.4h0M843.2 158.4h0M848.2 158.4h0M855.1 158.4h0M885.5 158.4h0M890.5 158.4h0M916.6 158.4h0M914.9 158.4h0M931.2 158.4h0M936.8 158.4h0M960.9 158.4h0M988.5 158.4h0M1029.0 158.4h0M1060.3 158.4h0M1060.3 158.4h0M1062.1 158.4h0M1067.6 158.4h0M1074.5 158.4h0M791.0 156.1h0M792.9 156.1h0M790.7 156.1h0M797.3 156.1h0M799.0 156.1h0M801.1 156.1h0M805.3 156.1h0M802.2 156.1h0M804.5 156.1h0M803.0 156.1h0M813.1 156.1h0M818.7 156.1h0M818.8 156.1h0M822.4 156.1h0M823.0 156.1h0M822.8 156.1h0M831.7 156.1h0M848.5 156.1h0M854.3 156.1h0M860.4 156.1h0M869.3 156.1h0M871.7 156.1h0M877.4 156.1h0M883.6 156.1h0M894.3 156.1h0M915.8 156.1h0M913.9 156.1h0M950.5 156.1h0M977.4 156.1h0M1049.8 156.1h0M791.6 153.8h0M789.7 153.8h0M796.1 153.8h0M795.6 153.8h0M795.5 153.8h0M798.3 153.8h0M800.9 153.8h0M799.3 153.8h0M797.6 153.8h0M800.5 153.8h0M798.1 153.8h0M798.6 153.8h0M801.2 153.8h0M802.6 153.8h0M808.3 153.8h0M808.4 153.8h0M810.2 153.8h0M814.2 153.8h0M819.9 153.8h0M827.6 153.8h0M825.7 153.8h0M838.3 153.8h0M846.8 153.8h0M846.7 153.8h0M850.1 153.8h0M860.2 153.8h0M873.6 153.8h0M891.7 153.8h0M902.1 153.8h0M917.6 153.8h0M926.6 153.8h0M930.0 153.8h0M934.8 153.8h0M956.3 153.8h0M963.5 153.8h0M996.5 153.8h0M1016.4 153.8h0M1014.6 153.8h0M790.2 151.5h0M796.2 151.5h0M795.8 151.5h0M799.6 151.5h0M798.6 151.5h0M798.7 151.5h0M806.5 151.5h0M809.5 151.5h0M813.3 151.5h0M812.4 151.5h0M815.3 151.5h0M826.4 151.5h0M831.2 151.5h0M831.7 151.5h0M838.8 151.5h0M846.7 151.5h0M866.5 151.5h0M874.6 151.5h0M877.8 151.5h0M880.9 151.5h0M882.7 151.5h0M886.3 151.5h0M890.3 151.5h0M897.6 151.5h0M916.2 151.5h0M927.0 151.5h0M972.4 151.5h0M981.7 151.5h0M990.4 151.5h0M1014.3 151.5h0M1016.3 151.5h0M1068.2 151.5h0M796.1 149.2h0M794.6 149.2h0M795.3 149.2h0M800.7 149.2h0M797.8 149.2h0M801.9 149.2h0M808.4 149.2h0M808.1 149.2h0M813.1 149.2h0M810.6 149.2h0M816.9 149.2h0M816.6 149.2h0M824.2 149.2h0M824.4 149.2h0M823.1 149.2h0M828.1 149.2h0M829.7 149.2h0M837.0 149.2h0M837.9 149.2h0M849.6 149.2h0M851.8 149.2h0M865.4 149.2h0M863.4 149.2h0M907.4 149.2h0M916.7 149.2h0M986.3 149.2h0M1024.5 149.2h0M1073.1 149.2h0M796.8 146.9h0M800.9 146.9h0M800.3 146.9h0M805.3 146.9h0M805.3 146.9h0M803.0 146.9h0M807.0 146.9h0M806.8 146.9h0M808.2 146.9h0M808.2 146.9h0M811.5 146.9h0M812.3 146.9h0M812.5 146.9h0M817.3 146.9h0M818.3 146.9h0M818.4 146.9h0M819.7 146.9h0M821.7 146.9h0M825.5 146.9h0M823.5 146.9h0M824.7 146.9h0M825.6 146.9h0M829.6 146.9h0M833.3 146.9h0M832.0 146.9h0M834.3 146.9h0M835.6 146.9h0M838.4 146.9h0M838.1 146.9h0M854.5 146.9h0M858.7 146.9h0M859.2 146.9h0M883.8 146.9h0M893.4 146.9h0M927.6 146.9h0M958.8 146.9h0M985.1 146.9h0M992.2 146.9h0M1016.2 146.9h0M1025.6 146.9h0M1050.7 146.9h0M1076.3 146.9h0M790.7 144.6h0M789.6 144.6h0M795.7 144.6h0M796.7 144.6h0M794.2 144.6h0M795.4 144.6h0M796.1 144.6h0M804.5 144.6h0M804.4 144.6h0M807.3 144.6h0M808.0 144.6h0M806.9 144.6h0M808.7 144.6h0M812.4 144.6h0M812.9 144.6h0M813.6 144.6h0M814.0 144.6h0M823.4 144.6h0M827.5 144.6h0M826.6 144.6h0M826.1 144.6h0M830.1 144.6h0M838.5 144.6h0M841.4 144.6h0M842.5 144.6h0M845.5 144.6h0M845.1 144.6h0M851.4 144.6h0M850.8 144.6h0M853.9 144.6h0M858.2 144.6h0M864.0 144.6h0M873.8 144.6h0M880.8 144.6h0M882.8 144.6h0M892.2 144.6h0M893.5 144.6h0M906.3 144.6h0M910.3 144.6h0M970.7 144.6h0M975.5 144.6h0M1036.3 144.6h0M1067.4 144.6h0M1072.6 144.6h0M790.4 142.3h0M790.7 142.3h0M790.6 142.3h0M793.5 142.3h0M800.8 142.3h0M804.2 142.3h0M804.5 142.3h0M808.7 142.3h0M809.0 142.3h0M806.2 142.3h0M813.1 142.3h0M812.8 142.3h0M810.4 142.3h0M813.2 142.3h0M812.8 142.3h0M814.2 142.3h0M816.8 142.3h0M823.1 142.3h0M823.2 142.3h0M826.5 142.3h0M826.3 142.3h0M828.0 142.3h0M832.5 142.3h0M835.2 142.3h0M833.6 142.3h0M841.1 142.3h0M845.0 142.3h0M843.2 142.3h0M845.8 142.3h0M845.7 142.3h0M852.0 142.3h0M858.4 142.3h0M862.0 142.3h0M869.1 142.3h0M868.4 142.3h0M888.1 142.3h0M895.5 142.3h0M900.7 142.3h0M898.7 142.3h0M934.0 142.3h0M935.6 142.3h0M945.6 142.3h0M952.0 142.3h0M951.1 142.3h0M967.5 142.3h0M977.2 142.3h0M980.6 142.3h0M1027.7 142.3h0M1059.0 142.3h0M1070.1 142.3h0M791.4 140.0h0M790.9 140.0h0M789.6 140.0h0M790.4 140.0h0M796.0 140.0h0M794.4 140.0h0M794.7 140.0h0M796.4 140.0h0M794.4 140.0h0M798.8 140.0h0M801.9 140.0h0M809.3 140.0h0M809.8 140.0h0M813.9 140.0h0M819.9 140.0h0M817.8 140.0h0M821.2 140.0h0M824.9 140.0h0M831.8 140.0h0M837.6 140.0h0M847.6 140.0h0M850.3 140.0h0M859.4 140.0h0M865.3 140.0h0M867.0 140.0h0M876.6 140.0h0M883.6 140.0h0M894.3 140.0h0M944.6 140.0h0M958.7 140.0h0M965.3 140.0h0M967.4 140.0h0M987.3 140.0h0M1009.0 140.0h0M1077.6 140.0h0M791.3 137.7h0M789.9 137.7h0M793.6 137.7h0M794.8 137.7h0M797.9 137.7h0M797.6 137.7h0M804.5 137.7h0M802.4 137.7h0M802.4 137.7h0M803.6 137.7h0M806.7 137.7h0M807.0 137.7h0M806.7 137.7h0M809.9 137.7h0M812.9 137.7h0M818.5 137.7h0M826.9 137.7h0M828.5 137.7h0M836.7 137.7h0M836.7 137.7h0M836.7 137.7h0M840.3 137.7h0M844.6 137.7h0M854.6 137.7h0M855.2 137.7h0M855.6 137.7h0M873.1 137.7h0M877.2 137.7h0M879.9 137.7h0M883.0 137.7h0M891.9 137.7h0M899.7 137.7h0M911.5 137.7h0M966.4 137.7h0M991.3 137.7h0M1042.6 137.7h0M1079.0 137.7h0M792.9 135.4h0M793.1 135.4h0M791.5 135.4h0M795.7 135.4h0M800.9 135.4h0M798.2 135.4h0M803.9 135.4h0M802.9 135.4h0M804.2 135.4h0M806.6 135.4h0M808.2 135.4h0M808.1 135.4h0M809.8 135.4h0M809.7 135.4h0M813.7 135.4h0M818.9 135.4h0M825.4 135.4h0M823.3 135.4h0M829.4 135.4h0M825.8 135.4h0M830.6 135.4h0M830.1 135.4h0M831.8 135.4h0M842.4 135.4h0M849.2 135.4h0M857.5 135.4h0M859.0 135.4h0M876.1 135.4h0M878.6 135.4h0M928.9 135.4h0M974.2 135.4h0M1042.1 135.4h0M1041.6 135.4h0M1054.3 135.4h0M792.9 133.1h0M791.2 133.1h0M793.2 133.1h0M793.4 133.1h0M797.5 133.1h0M795.6 133.1h0M796.2 133.1h0M805.4 133.1h0M803.1 133.1h0M808.4 133.1h0M808.5 133.1h0M811.9 133.1h0M811.3 133.1h0M814.4 133.1h0M814.1 133.1h0M815.6 133.1h0M823.3 133.1h0M825.9 133.1h0M837.3 133.1h0M846.7 133.1h0M861.5 133.1h0M863.0 133.1h0M881.7 133.1h0M888.4 133.1h0M890.3 133.1h0M895.6 133.1h0M918.8 133.1h0M918.9 133.1h0M931.0 133.1h0M960.4 133.1h0M964.6 133.1h0M975.6 133.1h0M981.1 133.1h0M1038.5 133.1h0M1063.7 133.1h0M790.8 130.8h0M796.7 130.8h0M796.4 130.8h0M799.0 130.8h0M802.2 130.8h0M806.6 130.8h0M815.2 130.8h0M818.3 130.8h0M822.7 130.8h0M831.4 130.8h0M838.3 130.8h0M838.2 130.8h0M841.1 130.8h0M847.2 130.8h0M847.0 130.8h0M848.2 130.8h0M856.9 130.8h0M859.2 130.8h0M867.2 130.8h0M905.2 130.8h0M911.7 130.8h0M938.4 130.8h0M939.8 130.8h0M947.1 130.8h0M953.9 130.8h0M970.3 130.8h0M991.3 130.8h0M997.7 130.8h0M1026.5 130.8h0M1062.8 130.8h0M1070.2 130.8h0M789.8 128.5h0M790.2 128.5h0M797.1 128.5h0M800.1 128.5h0M805.3 128.5h0M804.7 128.5h0M802.6 128.5h0M803.3 128.5h0M807.1 128.5h0M810.3 128.5h0M814.1 128.5h0M816.0 128.5h0M819.9 128.5h0M821.3 128.5h0M819.8 128.5h0M819.6 128.5h0M826.6 128.5h0M844.8 128.5h0M848.2 128.5h0M849.3 128.5h0M845.9 128.5h0M861.6 128.5h0M862.0 128.5h0M867.8 128.5h0M883.2 128.5h0M888.1 128.5h0M907.9 128.5h0M920.1 128.5h0M931.2 128.5h0M935.1 128.5h0M958.7 128.5h0M969.0 128.5h0M1039.5 128.5h0M791.2 126.2h0M794.1 126.2h0M793.8 126.2h0M798.7 126.2h0M801.0 126.2h0M808.5 126.2h0M809.2 126.2h0M807.8 126.2h0M810.0 126.2h0M811.5 126.2h0M811.2 126.2h0M812.3 126.2h0M811.5 126.2h0M816.5 126.2h0M819.3 126.2h0M818.0 126.2h0M829.4 126.2h0M837.1 126.2h0M843.0 126.2h0M852.2 126.2h0M856.1 126.2h0M861.2 126.2h0M862.1 126.2h0M863.3 126.2h0M865.2 126.2h0M868.6 126.2h0M872.1 126.2h0M876.7 126.2h0M882.1 126.2h0M910.4 126.2h0M952.1 126.2h0M987.1 126.2h0M995.4 126.2h0M1028.9 126.2h0M1039.3 126.2h0M1057.2 126.2h0M1055.9 126.2h0M1070.0 126.2h0M790.0 123.9h0M795.2 123.9h0M795.6 123.9h0M804.4 123.9h0M812.7 123.9h0M816.6 123.9h0M813.9 123.9h0M815.0 123.9h0M819.4 123.9h0M823.9 123.9h0M827.7 123.9h0M836.4 123.9h0M838.9 123.9h0M844.6 123.9h0M847.5 123.9h0M845.9 123.9h0M846.7 123.9h0M856.6 123.9h0M855.3 123.9h0M857.6 123.9h0M869.2 123.9h0M899.2 123.9h0M947.4 123.9h0M1024.1 123.9h0M1027.4 123.9h0M790.5 121.6h0M796.9 121.6h0M795.0 121.6h0M798.3 121.6h0M798.4 121.6h0M800.8 121.6h0M798.0 121.6h0M798.7 121.6h0M804.4 121.6h0M809.3 121.6h0M810.1 121.6h0M817.3 121.6h0M817.8 121.6h0M824.4 121.6h0M823.6 121.6h0M828.1 121.6h0M827.2 121.6h0M827.4 121.6h0M826.5 121.6h0M838.4 121.6h0M837.9 121.6h0M838.0 121.6h0M843.0 121.6h0M853.4 121.6h0M859.3 121.6h0M871.7 121.6h0M876.9 121.6h0M899.1 121.6h0M920.9 121.6h0M925.3 121.6h0M927.8 121.6h0M933.0 121.6h0M941.3 121.6h0M941.6 121.6h0M959.7 121.6h0M978.1 121.6h0M1006.0 121.6h0M800.0 119.3h0M803.4 119.3h0M804.6 119.3h0M802.0 119.3h0M807.2 119.3h0M813.2 119.3h0M809.6 119.3h0M812.8 119.3h0M821.2 119.3h0M828.4 119.3h0M829.5 119.3h0M830.9 119.3h0M836.0 119.3h0M836.4 119.3h0M837.0 119.3h0M836.8 119.3h0M852.8 119.3h0M859.9 119.3h0M858.2 119.3h0M861.0 119.3h0M871.4 119.3h0M881.0 119.3h0M912.2 119.3h0M976.8 119.3h0M999.9 119.3h0M1000.6 119.3h0M1007.3 119.3h0M1019.6 119.3h0M793.1 117.0h0M791.1 117.0h0M790.1 117.0h0M796.6 117.0h0M797.0 117.0h0M798.7 117.0h0M798.0 117.0h0M807.5 117.0h0M819.2 117.0h0M821.1 117.0h0M817.8 117.0h0M819.1 117.0h0M822.2 117.0h0M829.5 117.0h0M831.0 117.0h0M837.5 117.0h0M841.6 117.0h0M848.7 117.0h0M865.8 117.0h0M869.6 117.0h0M870.7 117.0h0M879.1 117.0h0M887.4 117.0h0M890.5 117.0h0M905.8 117.0h0M919.6 117.0h0M919.9 117.0h0M934.1 117.0h0M957.5 117.0h0M962.3 117.0h0M964.3 117.0h0M996.9 117.0h0M1034.2 117.0h0M1053.9 117.0h0M1058.0 117.0h0M1068.9 117.0h0M1069.3 117.0h0M790.9 114.7h0M791.5 114.7h0M789.6 114.7h0M790.7 114.7h0M793.0 114.7h0M793.5 114.7h0M795.7 114.7h0M797.3 114.7h0M799.3 114.7h0M800.4 114.7h0M798.3 114.7h0M801.8 114.7h0M807.2 114.7h0M806.0 114.7h0M812.1 114.7h0M816.9 114.7h0M817.0 114.7h0M817.8 114.7h0M821.5 114.7h0M822.2 114.7h0M828.0 114.7h0M829.0 114.7h0M829.9 114.7h0M833.1 114.7h0M830.5 114.7h0M834.4 114.7h0M835.6 114.7h0M834.0 114.7h0M839.3 114.7h0M846.5 114.7h0M848.7 114.7h0M855.0 114.7h0M861.7 114.7h0M915.4 114.7h0M918.5 114.7h0M925.8 114.7h0M929.3 114.7h0M957.1 114.7h0M980.4 114.7h0M994.3 114.7h0M1013.0 114.7h0M1053.9 114.7h0M791.5 112.3h0M797.0 112.3h0M794.9 112.3h0M793.7 112.3h0M800.7 112.3h0M801.1 112.3h0M799.6 112.3h0M798.8 112.3h0M804.5 112.3h0M803.9 112.3h0M804.4 112.3h0M803.4 112.3h0M810.2 112.3h0M814.1 112.3h0M821.2 112.3h0M823.1 112.3h0M828.4 112.3h0M829.6 112.3h0M842.2 112.3h0M847.9 112.3h0M868.3 112.3h0M868.9 112.3h0M882.1 112.3h0M915.7 112.3h0M946.4 112.3h0M959.6 112.3h0M979.5 112.3h0M995.0 112.3h0M1044.3 112.3h0M791.4 110.0h0M796.5 110.0h0M793.6 110.0h0M796.4 110.0h0M795.6 110.0h0M799.6 110.0h0M801.4 110.0h0M802.7 110.0h0M806.1 110.0h0M806.9 110.0h0M809.9 110.0h0M811.4 110.0h0M813.3 110.0h0M820.1 110.0h0M836.9 110.0h0M843.5 110.0h0M842.4 110.0h0M857.5 110.0h0M866.2 110.0h0M878.7 110.0h0M886.0 110.0h0M898.5 110.0h0M899.1 110.0h0M911.6 110.0h0M934.7 110.0h0M971.9 110.0h0M979.5 110.0h0M999.4 110.0h0M1033.6 110.0h0M1049.8 110.0h0M1060.5 110.0h0M792.0 107.7h0M795.9 107.7h0M795.2 107.7h0M796.5 107.7h0M797.5 107.7h0M796.2 107.7h0M803.1 107.7h0M804.3 107.7h0M804.0 107.7h0M805.9 107.7h0M807.3 107.7h0M810.9 107.7h0M813.4 107.7h0M817.0 107.7h0M820.7 107.7h0M821.7 107.7h0M823.1 107.7h0M828.2 107.7h0M836.4 107.7h0M845.9 107.7h0M851.7 107.7h0M851.4 107.7h0M854.1 107.7h0M878.9 107.7h0M881.5 107.7h0M881.9 107.7h0M892.2 107.7h0M926.3 107.7h0M977.4 107.7h0M1001.2 107.7h0M1057.5 107.7h0M1072.5 107.7h0M790.7 105.4h0M790.3 105.4h0M793.7 105.4h0M800.2 105.4h0M801.1 105.4h0M801.4 105.4h0M799.3 105.4h0M804.5 105.4h0M802.6 105.4h0M802.8 105.4h0M808.8 105.4h0M818.4 105.4h0M819.2 105.4h0M832.3 105.4h0M830.4 105.4h0M836.6 105.4h0M841.4 105.4h0M843.5 105.4h0M885.9 105.4h0M890.4 105.4h0M899.9 105.4h0M907.7 105.4h0M908.3 105.4h0M913.7 105.4h0M922.0 105.4h0M927.8 105.4h0M944.4 105.4h0M954.1 105.4h0M971.6 105.4h0M995.4 105.4h0M1038.9 105.4h0M1068.8 105.4h0M795.3 103.1h0M795.7 103.1h0M799.6 103.1h0M799.9 103.1h0M798.1 103.1h0M805.4 103.1h0M804.4 103.1h0M804.0 103.1h0M806.9 103.1h0M809.8 103.1h0M818.7 103.1h0M822.7 103.1h0M823.5 103.1h0M829.2 103.1h0M829.2 103.1h0M826.0 103.1h0M832.1 103.1h0M832.7 103.1h0M832.9 103.1h0M832.0 103.1h0M837.3 103.1h0M835.2 103.1h0M844.7 103.1h0M847.6 103.1h0M847.1 103.1h0M848.8 103.1h0M860.7 103.1h0M866.5 103.1h0M871.0 103.1h0M961.6 103.1h0M1009.1 103.1h0M1024.3 103.1h0M1041.2 103.1h0M1063.9 103.1h0M791.4 100.8h0M790.2 100.8h0M790.8 100.8h0M801.0 100.8h0M797.7 100.8h0M798.0 100.8h0M799.4 100.8h0M802.5 100.8h0M802.1 100.8h0M804.5 100.8h0M808.6 100.8h0M809.8 100.8h0M814.1 100.8h0M815.6 100.8h0M815.6 100.8h0M815.0 100.8h0M814.4 100.8h0M819.2 100.8h0M820.5 100.8h0M822.5 100.8h0M823.6 100.8h0M824.5 100.8h0M826.0 100.8h0M834.1 100.8h0M846.1 100.8h0M851.7 100.8h0M854.0 100.8h0M865.8 100.8h0M878.4 100.8h0M893.6 100.8h0M896.1 100.8h0M910.6 100.8h0M949.0 100.8h0M969.2 100.8h0M979.6 100.8h0M1001.3 100.8h0M1005.1 100.8h0M1071.9 100.8h0M1073.5 100.8h0M792.8 98.5h0M794.9 98.5h0M801.0 98.5h0M800.4 98.5h0M797.7 98.5h0M805.3 98.5h0M803.2 98.5h0M802.9 98.5h0M807.2 98.5h0M812.9 98.5h0M814.7 98.5h0M814.3 98.5h0M816.1 98.5h0M820.8 98.5h0M829.5 98.5h0M826.5 98.5h0M831.7 98.5h0M836.3 98.5h0M840.3 98.5h0M843.4 98.5h0M842.3 98.5h0M847.0 98.5h0M850.9 98.5h0M856.9 98.5h0M878.3 98.5h0M883.4 98.5h0M895.5 98.5h0M898.7 98.5h0M952.9 98.5h0M961.8 98.5h0M1019.9 98.5h0M1027.3 98.5h0M1054.5 98.5h0M1079.9 98.5h0M791.7 96.2h0M792.1 96.2h0M796.2 96.2h0M795.3 96.2h0M800.7 96.2h0M800.9 96.2h0M798.2 96.2h0M798.0 96.2h0M801.2 96.2h0M798.2 96.2h0M806.8 96.2h0M812.9 96.2h0M819.8 96.2h0M818.3 96.2h0M818.2 96.2h0M821.6 96.2h0M822.9 96.2h0M823.0 96.2h0M831.4 96.2h0M830.0 96.2h0M833.4 96.2h0M835.0 96.2h0M840.0 96.2h0M839.4 96.2h0M843.8 96.2h0M846.8 96.2h0M855.7 96.2h0M864.8 96.2h0M876.9 96.2h0M907.2 96.2h0M947.3 96.2h0M1051.5 96.2h0M1069.5 96.2h0M1072.8 96.2h0M793.5 93.9h0M796.8 93.9h0M796.9 93.9h0M794.9 93.9h0M797.2 93.9h0M801.1 93.9h0M802.2 93.9h0M804.6 93.9h0M812.0 93.9h0M813.2 93.9h0M809.6 93.9h0M809.6 93.9h0M816.5 93.9h0M838.3 93.9h0M839.3 93.9h0M857.7 93.9h0M867.9 93.9h0M870.3 93.9h0M880.5 93.9h0M878.8 93.9h0M897.0 93.9h0M905.0 93.9h0M929.5 93.9h0M945.1 93.9h0M947.0 93.9h0M979.3 93.9h0M1017.0 93.9h0M1047.2 93.9h0M1065.1 93.9h0M1061.9 93.9h0M793.5 91.6h0M789.8 91.6h0M801.4 91.6h0M801.7 91.6h0M802.3 91.6h0M804.8 91.6h0M807.9 91.6h0M808.7 91.6h0M808.6 91.6h0M811.2 91.6h0M813.4 91.6h0M815.5 91.6h0M817.5 91.6h0M815.6 91.6h0M819.5 91.6h0M819.2 91.6h0M821.4 91.6h0M822.7 91.6h0M822.1 91.6h0M841.2 91.6h0M845.4 91.6h0M857.1 91.6h0M853.6 91.6h0M854.0 91.6h0M870.1 91.6h0M876.9 91.6h0M889.4 91.6h0M902.5 91.6h0M923.6 91.6h0M933.3 91.6h0M950.1 91.6h0M959.1 91.6h0M978.7 91.6h0M982.8 91.6h0M999.5 91.6h0M1037.4 91.6h0M1069.9 91.6h0M789.8 89.3h0M790.1 89.3h0M798.9 89.3h0M801.0 89.3h0M804.7 89.3h0M806.9 89.3h0M806.9 89.3h0M806.7 89.3h0M814.3 89.3h0M813.8 89.3h0M815.9 89.3h0M817.4 89.3h0M824.7 89.3h0M828.4 89.3h0M829.0 89.3h0M826.8 89.3h0M835.8 89.3h0M834.8 89.3h0M841.0 89.3h0M844.0 89.3h0M857.1 89.3h0M858.1 89.3h0M858.9 89.3h0M873.4 89.3h0M878.6 89.3h0M883.4 89.3h0M888.2 89.3h0M885.9 89.3h0M900.2 89.3h0M902.8 89.3h0M929.4 89.3h0M975.8 89.3h0M979.6 89.3h0M991.1 89.3h0M1038.5 89.3h0M1044.8 89.3h0M792.0 87.0h0M793.2 87.0h0M798.6 87.0h0M798.0 87.0h0M804.3 87.0h0M804.9 87.0h0M811.6 87.0h0M814.2 87.0h0M816.6 87.0h0M820.7 87.0h0M823.2 87.0h0M830.2 87.0h0M837.1 87.0h0M834.0 87.0h0M845.7 87.0h0M867.9 87.0h0M878.1 87.0h0M926.8 87.0h0M961.0 87.0h0M1029.3 87.0h0M1039.3 87.0h0M792.8 84.7h0M792.6 84.7h0M797.0 84.7h0M799.1 84.7h0M800.9 84.7h0M802.3 84.7h0M803.6 84.7h0M801.8 84.7h0M804.5 84.7h0M809.1 84.7h0M813.1 84.7h0M820.7 84.7h0M818.6 84.7h0M822.9 84.7h0M825.3 84.7h0M829.5 84.7h0M828.1 84.7h0M830.1 84.7h0M841.3 84.7h0M843.1 84.7h0M846.2 84.7h0M861.0 84.7h0M874.2 84.7h0M896.6 84.7h0M909.4 84.7h0M915.7 84.7h0M929.3 84.7h0M926.7 84.7h0M937.5 84.7h0M950.4 84.7h0M985.1 84.7h0M989.1 84.7h0M791.2 82.4h0M795.1 82.4h0M795.7 82.4h0M800.8 82.4h0M804.8 82.4h0M810.8 82.4h0M815.6 82.4h0M838.6 82.4h0M838.5 82.4h0M852.0 82.4h0M893.8 82.4h0M915.0 82.4h0M967.6 82.4h0M978.6 82.4h0M993.0 82.4h0M1041.3 82.4h0M1070.5 82.4h0M790.6 80.1h0M790.3 80.1h0M791.2 80.1h0M797.2 80.1h0M795.8 80.1h0M802.6 80.1h0M803.1 80.1h0M807.0 80.1h0M805.8 80.1h0M806.1 80.1h0M812.1 80.1h0M816.9 80.1h0M815.6 80.1h0M814.5 80.1h0M824.2 80.1h0M824.4 80.1h0M832.8 80.1h0M841.4 80.1h0M842.8 80.1h0M842.6 80.1h0M842.6 80.1h0M853.3 80.1h0M851.6 80.1h0M852.0 80.1h0M859.2 80.1h0M867.8 80.1h0M877.0 80.1h0M879.4 80.1h0M890.9 80.1h0M900.6 80.1h0M938.5 80.1h0M961.3 80.1h0M987.3 80.1h0M991.2 80.1h0M993.8 80.1h0M1028.6 80.1h0M1042.8 80.1h0M1043.2 80.1h0M790.9 77.8h0M791.8 77.8h0M796.3 77.8h0M794.8 77.8h0M795.3 77.8h0M799.7 77.8h0M804.2 77.8h0M803.7 77.8h0M808.8 77.8h0M807.2 77.8h0M806.8 77.8h0M806.9 77.8h0M813.0 77.8h0M815.6 77.8h0M816.4 77.8h0M814.7 77.8h0M817.2 77.8h0M824.2 77.8h0M829.1 77.8h0M832.5 77.8h0M830.8 77.8h0M837.2 77.8h0M841.6 77.8h0M845.4 77.8h0M845.0 77.8h0M844.2 77.8h0M854.1 77.8h0M854.7 77.8h0M859.9 77.8h0M859.8 77.8h0M859.7 77.8h0M868.8 77.8h0M873.8 77.8h0M876.9 77.8h0M899.1 77.8h0M904.8 77.8h0M915.7 77.8h0M923.6 77.8h0M938.0 77.8h0M992.1 77.8h0M1039.6 77.8h0M793.8 75.5h0M795.3 75.5h0M793.6 75.5h0M796.9 75.5h0M796.6 75.5h0M794.0 75.5h0M799.7 75.5h0M797.7 75.5h0M805.3 75.5h0M809.5 75.5h0M808.2 75.5h0M807.3 75.5h0M809.9 75.5h0M813.0 75.5h0M811.7 75.5h0M814.6 75.5h0M816.6 75.5h0M820.1 75.5h0M818.8 75.5h0M826.4 75.5h0M829.8 75.5h0M837.9 75.5h0M860.6 75.5h0M864.0 75.5h0M879.7 75.5h0M887.7 75.5h0M900.2 75.5h0M898.5 75.5h0M906.5 75.5h0M909.4 75.5h0M930.7 75.5h0M954.1 75.5h0M969.0 75.5h0M1007.8 75.5h0M1041.4 75.5h0M1063.1 75.5h0M793.3 73.2h0M791.6 73.2h0M789.7 73.2h0M791.0 73.2h0M793.7 73.2h0M800.4 73.2h0M801.3 73.2h0M798.9 73.2h0M803.0 73.2h0M804.7 73.2h0M809.1 73.2h0M817.2 73.2h0M817.5 73.2h0M814.0 73.2h0M818.8 73.2h0M818.0 73.2h0M840.2 73.2h0M843.4 73.2h0M845.5 73.2h0M858.3 73.2h0M864.0 73.2h0M873.1 73.2h0M882.5 73.2h0M900.3 73.2h0M913.3 73.2h0M919.2 73.2h0M950.2 73.2h0M1012.2 73.2h0M1057.9 73.2h0M1061.4 73.2h0M1068.5 73.2h0M1075.6 73.2h0M793.0 70.9h0M792.4 70.9h0M801.0 70.9h0M802.2 70.9h0M804.9 70.9h0M808.6 70.9h0M807.7 70.9h0M807.0 70.9h0M808.6 70.9h0M812.4 70.9h0M809.8 70.9h0M810.0 70.9h0M815.3 70.9h0M820.7 70.9h0M822.8 70.9h0M825.5 70.9h0M832.6 70.9h0M831.1 70.9h0M839.0 70.9h0M845.7 70.9h0M850.8 70.9h0M850.8 70.9h0M863.5 70.9h0M862.2 70.9h0M884.9 70.9h0M888.5 70.9h0M895.9 70.9h0M912.5 70.9h0M913.1 70.9h0M933.4 70.9h0M937.2 70.9h0M944.9 70.9h0M964.6 70.9h0M978.7 70.9h0M998.0 70.9h0M1071.8 70.9h0M790.9 68.6h0M794.2 68.6h0M797.3 68.6h0M793.6 68.6h0M795.1 68.6h0M798.1 68.6h0M800.7 68.6h0M798.6 68.6h0M800.4 68.6h0M804.7 68.6h0M816.9 68.6h0M814.5 68.6h0M815.4 68.6h0M818.7 68.6h0M818.5 68.6h0M821.7 68.6h0M824.6 68.6h0M828.5 68.6h0M829.1 68.6h0M832.4 68.6h0M834.6 68.6h0M841.6 68.6h0M859.2 68.6h0M866.9 68.6h0M889.3 68.6h0M957.8 68.6h0M972.3 68.6h0M992.0 68.6h0M1011.1 68.6h0M1049.2 68.6h0M1073.3 68.6h0M793.1 66.2h0M789.6 66.2h0M795.3 66.2h0M795.8 66.2h0M793.7 66.2h0M796.9 66.2h0M798.2 66.2h0M801.1 66.2h0M805.0 66.2h0M802.0 66.2h0M806.1 66.2h0M805.9 66.2h0M810.6 66.2h0M812.2 66.2h0M811.8 66.2h0M816.5 66.2h0M814.9 66.2h0M819.4 66.2h0M823.5 66.2h0M825.5 66.2h0M829.6 66.2h0M831.7 66.2h0M836.8 66.2h0M844.0 66.2h0M844.4 66.2h0M842.4 66.2h0M849.0 66.2h0M853.0 66.2h0M881.5 66.2h0M904.2 66.2h0M902.1 66.2h0M901.7 66.2h0M914.5 66.2h0M999.4 66.2h0M1015.5 66.2h0M1039.2 66.2h0M369.1 266.8h0M423.1 266.8h0M447.4 266.8h0M461.2 266.8h0M487.7 266.8h0M507.2 266.8h0M558.8 266.8h0M577.9 266.8h0M603.2 266.8h0M604.0 266.8h0M608.3 266.8h0M626.2 266.8h0M640.2 266.8h0M653.9 266.8h0M662.9 266.8h0M307.4 264.5h0M311.4 264.5h0M313.5 264.5h0M315.9 264.5h0M327.2 264.5h0M336.2 264.5h0M371.7 264.5h0M385.6 264.5h0M424.3 264.5h0M470.3 264.5h0M475.3 264.5h0M471.6 264.5h0M480.4 264.5h0M497.3 264.5h0M501.3 264.5h0M505.3 264.5h0M520.1 264.5h0M527.4 264.5h0M528.9 264.5h0M531.4 264.5h0M545.8 264.5h0M546.8 264.5h0M544.2 264.5h0M575.9 264.5h0M577.1 264.5h0M575.6 264.5h0M588.2 264.5h0M589.3 264.5h0M590.0 264.5h0M636.7 264.5h0M660.9 264.5h0M671.3 264.5h0M669.6 264.5h0M304.6 262.2h0M313.7 262.2h0M325.1 262.2h0M339.6 262.2h0M344.6 262.2h0M349.9 262.2h0M348.8 262.2h0M356.7 262.2h0M421.2 262.2h0M443.4 262.2h0M448.6 262.2h0M454.5 262.2h0M455.0 262.2h0M455.5 262.2h0M494.3 262.2h0M498.9 262.2h0M497.8 262.2h0M502.0 262.2h0M507.7 262.2h0M519.3 262.2h0M546.8 262.2h0M543.8 262.2h0M547.8 262.2h0M558.4 262.2h0M556.8 262.2h0M564.6 262.2h0M568.6 262.2h0M574.5 262.2h0M585.2 262.2h0M593.6 262.2h0M599.3 262.2h0M626.9 262.2h0M629.8 262.2h0M635.3 262.2h0M635.1 262.2h0M636.8 262.2h0M641.2 262.2h0M656.8 262.2h0M668.0 262.2h0M668.6 262.2h0M668.2 262.2h0M673.6 262.2h0M303.4 259.9h0M306.0 259.9h0M321.3 259.9h0M320.9 259.9h0M320.1 259.9h0M325.1 259.9h0M330.8 259.9h0M331.3 259.9h0M328.7 259.9h0M327.8 259.9h0M338.6 259.9h0M340.6 259.9h0M354.0 259.9h0M358.8 259.9h0M361.3 259.9h0M379.1 259.9h0M378.7 259.9h0M395.9 259.9h0M399.9 259.9h0M401.4 259.9h0M411.0 259.9h0M422.0 259.9h0M426.1 259.9h0M423.8 259.9h0M425.6 259.9h0M427.5 259.9h0M437.2 259.9h0M448.3 259.9h0M452.6 259.9h0M452.6 259.9h0M456.8 259.9h0M472.8 259.9h0M473.2 259.9h0M472.6 259.9h0M499.3 259.9h0M510.0 259.9h0M516.9 259.9h0M522.7 259.9h0M529.3 259.9h0M531.3 259.9h0M532.1 259.9h0M550.4 259.9h0M556.5 259.9h0M559.0 259.9h0M560.2 259.9h0M572.8 259.9h0M577.8 259.9h0M583.1 259.9h0M587.7 259.9h0M589.6 259.9h0M591.2 259.9h0M609.1 259.9h0M613.3 259.9h0M616.9 259.9h0M622.7 259.9h0M623.9 259.9h0M626.8 259.9h0M635.3 259.9h0M640.5 259.9h0M642.7 259.9h0M652.5 259.9h0M661.3 259.9h0M667.1 259.9h0M666.3 259.9h0M674.9 259.9h0M679.8 259.9h0M310.1 257.6h0M316.5 257.6h0M322.0 257.6h0M324.4 257.6h0M344.2 257.6h0M358.9 257.6h0M361.0 257.6h0M373.7 257.6h0M395.1 257.6h0M413.0 257.6h0M413.7 257.6h0M422.8 257.6h0M424.2 257.6h0M428.9 257.6h0M449.1 257.6h0M467.2 257.6h0M473.9 257.6h0M479.5 257.6h0M480.1 257.6h0M490.3 257.6h0M488.7 257.6h0M487.7 257.6h0M495.4 257.6h0M516.7 257.6h0M516.8 257.6h0M515.6 257.6h0M525.0 257.6h0M532.9 257.6h0M534.2 257.6h0M537.9 257.6h0M548.8 257.6h0M559.3 257.6h0M567.1 257.6h0M570.9 257.6h0M572.1 257.6h0M583.9 257.6h0M595.3 257.6h0M596.4 257.6h0M596.0 257.6h0M614.8 257.6h0M628.3 257.6h0M662.0 257.6h0M667.1 257.6h0M680.0 257.6h0M681.7 257.6h0M309.3 255.3h0M314.6 255.3h0M322.3 255.3h0M320.2 255.3h0M333.6 255.3h0M346.8 255.3h0M354.6 255.3h0M363.1 255.3h0M392.6 255.3h0M395.9 255.3h0M407.8 255.3h0M412.8 255.3h0M415.3 255.3h0M418.0 255.3h0M421.5 255.3h0M427.3 255.3h0M429.8 255.3h0M438.8 255.3h0M446.2 255.3h0M449.0 255.3h0M460.2 255.3h0M466.2 255.3h0M466.7 255.3h0M467.7 255.3h0M473.1 255.3h0M477.1 255.3h0M481.1 255.3h0M481.2 255.3h0M483.0 255.3h0M492.0 255.3h0M514.7 255.3h0M515.0 255.3h0M520.8 255.3h0M526.9 255.3h0M523.5 255.3h0M539.9 255.3h0M554.0 255.3h0M556.3 255.3h0M559.1 255.3h0M561.0 255.3h0M567.5 255.3h0M568.8 255.3h0M578.4 255.3h0M581.9 255.3h0M590.4 255.3h0M590.0 255.3h0M591.1 255.3h0M592.9 255.3h0M592.6 255.3h0M596.3 255.3h0M601.8 255.3h0M603.8 255.3h0M610.6 255.3h0M616.3 255.3h0M632.7 255.3h0M632.3 255.3h0M638.0 255.3h0M638.4 255.3h0M645.8 255.3h0M643.7 255.3h0M648.1 255.3h0M661.3 255.3h0M660.8 255.3h0M669.4 255.3h0M674.6 255.3h0M672.4 255.3h0M679.1 255.3h0M678.0 255.3h0M686.5 255.3h0M689.1 255.3h0M717.2 255.3h0M804.5 255.3h0M831.4 255.3h0M862.5 255.3h0M867.5 255.3h0M900.3 255.3h0M980.4 255.3h0M304.9 253.0h0M307.5 253.0h0M317.3 253.0h0M325.4 253.0h0M346.2 253.0h0M344.7 253.0h0M350.4 253.0h0M355.1 253.0h0M359.6 253.0h0M367.0 253.0h0M373.5 253.0h0M389.6 253.0h0M388.9 253.0h0M400.5 253.0h0M407.1 253.0h0M413.3 253.0h0M413.6 253.0h0M416.3 253.0h0M424.7 253.0h0M427.6 253.0h0M439.4 253.0h0M436.3 253.0h0M438.7 253.0h0M448.2 253.0h0M456.2 253.0h0M466.3 253.0h0M478.1 253.0h0M486.9 253.0h0M494.7 253.0h0M491.6 253.0h0M494.2 253.0h0M510.8 253.0h0M509.2 253.0h0M522.2 253.0h0M538.9 253.0h0M545.0 253.0h0M560.7 253.0h0M568.0 253.0h0M580.7 253.0h0M583.8 253.0h0M592.1 253.0h0M593.3 253.0h0M603.2 253.0h0M611.3 253.0h0M622.3 253.0h0M622.8 253.0h0M630.8 253.0h0M628.6 253.0h0M638.8 253.0h0M642.4 253.0h0M642.1 253.0h0M645.3 253.0h0M652.6 253.0h0M658.5 253.0h0M655.9 253.0h0M662.4 253.0h0M666.2 253.0h0M680.6 253.0h0M680.2 253.0h0M703.4 253.0h0M712.7 253.0h0M713.8 253.0h0M725.6 253.0h0M739.8 253.0h0M752.3 253.0h0M762.6 253.0h0M790.6 253.0h0M810.6 253.0h0M854.6 253.0h0M858.4 253.0h0M876.3 253.0h0M876.7 253.0h0M894.3 253.0h0M930.3 253.0h0M939.7 253.0h0M943.3 253.0h0M950.0 253.0h0M963.7 253.0h0M981.6 253.0h0M987.1 253.0h0M997.9 253.0h0M1022.5 253.0h0M1042.9 253.0h0M1041.5 253.0h0M1053.9 253.0h0M320.0 250.7h0M332.7 250.7h0M349.7 250.7h0M358.2 250.7h0M360.1 250.7h0M360.5 250.7h0M372.0 250.7h0M373.1 250.7h0M378.9 250.7h0M390.4 250.7h0M390.7 250.7h0M401.6 250.7h0M405.7 250.7h0M404.3 250.7h0M413.8 250.7h0M420.2 250.7h0M420.4 250.7h0M430.1 250.7h0M442.7 250.7h0M446.8 250.7h0M444.8 250.7h0M464.3 250.7h0M473.9 250.7h0M482.8 250.7h0M485.8 250.7h0M500.4 250.7h0M501.9 250.7h0M537.6 250.7h0M542.8 250.7h0M547.7 250.7h0M556.6 250.7h0M562.0 250.7h0M561.6 250.7h0M563.9 250.7h0M568.7 250.7h0M567.4 250.7h0M569.8 250.7h0M582.4 250.7h0M585.1 250.7h0M587.5 250.7h0M599.1 250.7h0M595.8 250.7h0M605.7 250.7h0M608.2 250.7h0M634.3 250.7h0M641.5 250.7h0M642.0 250.7h0M641.5 250.7h0M647.2 250.7h0M651.1 250.7h0M649.3 250.7h0M653.9 250.7h0M656.8 250.7h0M659.1 250.7h0M663.3 250.7h0M659.8 250.7h0M669.1 250.7h0M677.1 250.7h0M693.2 250.7h0M701.9 250.7h0M700.3 250.7h0M700.6 250.7h0M708.8 250.7h0M717.6 250.7h0M729.5 250.7h0M746.5 250.7h0M751.9 250.7h0M752.8 250.7h0M767.3 250.7h0M765.8 250.7h0M774.6 250.7h0M785.3 250.7h0M794.4 250.7h0M798.5 250.7h0M796.9 250.7h0M798.3 250.7h0M844.4 250.7h0M856.8 250.7h0M880.0 250.7h0M909.8 250.7h0M925.0 250.7h0M927.6 250.7h0M933.5 250.7h0M945.5 250.7h0M948.9 250.7h0M954.4 250.7h0M1040.1 250.7h0M1071.3 250.7h0M310.8 248.3h0M312.8 248.3h0M324.5 248.3h0M334.8 248.3h0M335.3 248.3h0M332.4 248.3h0M349.3 248.3h0M354.4 248.3h0M374.2 248.3h0M387.8 248.3h0M398.2 248.3h0M409.9 248.3h0M410.7 248.3h0M417.3 248.3h0M420.5 248.3h0M424.5 248.3h0M431.6 248.3h0M437.6 248.3h0M439.4 248.3h0M448.0 248.3h0M447.7 248.3h0M462.2 248.3h0M466.4 248.3h0M469.6 248.3h0M467.9 248.3h0M477.4 248.3h0M479.1 248.3h0M481.0 248.3h0M486.1 248.3h0M485.3 248.3h0M488.7 248.3h0M499.5 248.3h0M503.5 248.3h0M504.3 248.3h0M508.5 248.3h0M514.9 248.3h0M513.8 248.3h0M514.1 248.3h0M524.4 248.3h0M543.6 248.3h0M548.0 248.3h0M547.7 248.3h0M570.5 248.3h0M580.8 248.3h0M582.0 248.3h0M585.6 248.3h0M591.2 248.3h0M596.1 248.3h0M608.7 248.3h0M610.4 248.3h0M619.1 248.3h0M626.0 248.3h0M623.6 248.3h0M627.2 248.3h0M635.1 248.3h0M637.2 248.3h0M638.1 248.3h0M655.3 248.3h0M658.1 248.3h0M660.8 248.3h0M667.0 248.3h0M674.6 248.3h0M673.4 248.3h0M683.2 248.3h0M686.0 248.3h0M695.6 248.3h0M706.4 248.3h0M731.5 248.3h0M746.3 248.3h0M752.1 248.3h0M759.1 248.3h0M759.9 248.3h0M762.5 248.3h0M767.0 248.3h0M777.0 248.3h0M784.4 248.3h0M799.6 248.3h0M804.0 248.3h0M804.6 248.3h0M808.4 248.3h0M813.3 248.3h0M834.6 248.3h0M839.9 248.3h0M841.0 248.3h0M850.9 248.3h0M847.9 248.3h0M853.2 248.3h0M855.4 248.3h0M885.8 248.3h0M883.5 248.3h0M907.6 248.3h0M908.6 248.3h0M920.8 248.3h0M923.5 248.3h0M931.0 248.3h0M941.9 248.3h0M944.1 248.3h0M945.5 248.3h0M953.4 248.3h0M958.8 248.3h0M966.6 248.3h0M963.9 248.3h0M970.4 248.3h0M982.6 248.3h0M988.0 248.3h0M1001.0 248.3h0M1000.1 248.3h0M1037.3 248.3h0M1058.6 248.3h0M307.4 246.0h0M311.8 246.0h0M321.5 246.0h0M323.0 246.0h0M322.4 246.0h0M322.3 246.0h0M320.3 246.0h0M329.7 246.0h0M333.9 246.0h0M339.0 246.0h0M341.3 246.0h0M347.5 246.0h0M352.4 246.0h0M357.7 246.0h0M357.4 246.0h0M362.0 246.0h0M362.1 246.0h0M388.2 246.0h0M388.1 246.0h0M398.6 246.0h0M398.1 246.0h0M399.2 246.0h0M413.5 246.0h0M427.2 246.0h0M438.5 246.0h0M437.3 246.0h0M435.8 246.0h0M449.1 246.0h0M449.7 246.0h0M454.4 246.0h0M465.5 246.0h0M466.4 246.0h0M485.2 246.0h0M494.3 246.0h0M501.2 246.0h0M506.5 246.0h0M506.2 246.0h0M506.5 246.0h0M511.4 246.0h0M517.8 246.0h0M520.6 246.0h0M524.1 246.0h0M528.8 246.0h0M531.1 246.0h0M532.1 246.0h0M532.3 246.0h0M536.2 246.0h0M541.9 246.0h0M552.7 246.0h0M561.8 246.0h0M562.3 246.0h0M567.9 246.0h0M569.7 246.0h0M581.1 246.0h0M586.4 246.0h0M585.9 246.0h0M598.8 246.0h0M597.0 246.0h0M605.6 246.0h0M606.6 246.0h0M610.3 246.0h0M618.0 246.0h0M618.7 246.0h0M625.0 246.0h0M631.3 246.0h0M658.2 246.0h0M657.0 246.0h0M664.7 246.0h0M675.0 246.0h0M674.2 246.0h0M687.6 246.0h0M711.0 246.0h0M718.2 246.0h0M741.0 246.0h0M762.7 246.0h0M778.5 246.0h0M793.2 246.0h0M791.9 246.0h0M827.3 246.0h0M834.0 246.0h0M835.9 246.0h0M835.4 246.0h0M840.4 246.0h0M842.7 246.0h0M860.3 246.0h0M867.7 246.0h0M895.2 246.0h0M913.2 246.0h0M922.7 246.0h0M922.8 246.0h0M926.7 246.0h0M944.2 246.0h0M948.0 246.0h0M955.6 246.0h0M956.1 246.0h0M964.1 246.0h0M980.6 246.0h0M1001.9 246.0h0M1032.3 246.0h0M1037.1 246.0h0M1040.2 246.0h0M1060.5 246.0h0M1065.3 246.0h0M313.4 243.7h0M313.7 243.7h0M314.6 243.7h0M321.1 243.7h0M347.1 243.7h0M348.7 243.7h0M349.4 243.7h0M358.9 243.7h0M370.6 243.7h0M373.8 243.7h0M375.6 243.7h0M393.9 243.7h0M394.1 243.7h0M392.6 243.7h0M404.5 243.7h0M404.6 243.7h0M407.8 243.7h0M412.1 243.7h0M411.5 243.7h0M412.9 243.7h0M422.7 243.7h0M426.4 243.7h0M427.4 243.7h0M424.7 243.7h0M428.9 243.7h0M429.2 243.7h0M435.9 243.7h0M454.3 243.7h0M457.7 243.7h0M489.0 243.7h0M515.1 243.7h0M511.5 243.7h0M511.8 243.7h0M526.8 243.7h0M524.8 243.7h0M529.3 243.7h0M533.8 243.7h0M536.8 243.7h0M535.8 243.7h0M544.6 243.7h0M546.6 243.7h0M550.0 243.7h0M565.0 243.7h0M575.2 243.7h0M575.7 243.7h0M583.2 243.7h0M579.6 243.7h0M588.4 243.7h0M590.5 243.7h0M598.5 243.7h0M596.0 243.7h0M617.1 243.7h0M633.1 243.7h0M636.6 243.7h0M644.1 243.7h0M647.5 243.7h0M662.2 243.7h0M678.1 243.7h0M679.7 243.7h0M684.5 243.7h0M685.9 243.7h0M689.4 243.7h0M687.4 243.7h0M702.5 243.7h0M699.8 243.7h0M704.9 243.7h0M718.6 243.7h0M721.1 243.7h0M725.6 243.7h0M735.5 243.7h0M737.7 243.7h0M750.2 243.7h0M750.2 243.7h0M757.3 243.7h0M764.4 243.7h0M791.7 243.7h0M796.1 243.7h0M804.4 243.7h0M822.6 243.7h0M826.0 243.7h0M843.0 243.7h0M841.8 243.7h0M846.6 243.7h0M860.3 243.7h0M883.9 243.7h0M885.3 243.7h0M891.4 243.7h0M911.6 243.7h0M911.5 243.7h0M922.3 243.7h0M925.8 243.7h0M944.7 243.7h0M990.4 243.7h0M989.4 243.7h0M999.6 243.7h0M1005.8 243.7h0M1022.7 243.7h0M1025.3 243.7h0M1034.9 243.7h0M1041.5 243.7h0M1047.1 243.7h0M1048.0 243.7h0M307.5 241.4h0M314.4 241.4h0M314.8 241.4h0M311.5 241.4h0M316.9 241.4h0M327.7 241.4h0M327.7 241.4h0M328.1 241.4h0M332.7 241.4h0M340.9 241.4h0M348.6 241.4h0M352.8 241.4h0M356.3 241.4h0M357.2 241.4h0M357.8 241.4h0M359.8 241.4h0M363.8 241.4h0M371.2 241.4h0M380.5 241.4h0M384.7 241.4h0M384.0 241.4h0M387.2 241.4h0M391.3 241.4h0M392.3 241.4h0M393.4 241.4h0M393.2 241.4h0M397.7 241.4h0M396.7 241.4h0M401.0 241.4h0M404.0 241.4h0M410.8 241.4h0M427.2 241.4h0M424.5 241.4h0M429.0 241.4h0M432.2 241.4h0M439.7 241.4h0M448.5 241.4h0M450.8 241.4h0M450.5 241.4h0M464.6 241.4h0M479.8 241.4h0M481.4 241.4h0M501.8 241.4h0M503.8 241.4h0M530.6 241.4h0M542.8 241.4h0M541.1 241.4h0M543.2 241.4h0M551.1 241.4h0M557.4 241.4h0M566.2 241.4h0M568.2 241.4h0M569.2 241.4h0M577.9 241.4h0M583.9 241.4h0M588.8 241.4h0M592.9 241.4h0M597.5 241.4h0M601.1 241.4h0M606.7 241.4h0M619.3 241.4h0M616.2 241.4h0M621.4 241.4h0M623.7 241.4h0M624.0 241.4h0M629.7 241.4h0M638.7 241.4h0M635.9 241.4h0M644.0 241.4h0M645.6 241.4h0M643.5 241.4h0M649.9 241.4h0M651.9 241.4h0M656.3 241.4h0M670.2 241.4h0M674.5 241.4h0M680.2 241.4h0M682.8 241.4h0M706.0 241.4h0M708.0 241.4h0M717.7 241.4h0M730.7 241.4h0M769.6 241.4h0M781.8 241.4h0M794.7 241.4h0M797.2 241.4h0M804.4 241.4h0M823.6 241.4h0M842.1 241.4h0M853.7 241.4h0M851.8 241.4h0M887.0 241.4h0M891.1 241.4h0M915.2 241.4h0M938.9 241.4h0M938.2 241.4h0M953.8 241.4h0M958.5 241.4h0M973.6 241.4h0M992.6 241.4h0M999.3 241.4h0M999.0 241.4h0M1011.4 241.4h0M1023.4 241.4h0M1035.9 241.4h0M1048.4 241.4h0M1071.2 241.4h0M307.4 239.1h0M309.7 239.1h0M310.8 239.1h0M313.1 239.1h0M319.9 239.1h0M325.2 239.1h0M328.0 239.1h0M330.9 239.1h0M336.3 239.1h0M335.9 239.1h0M346.8 239.1h0M349.7 239.1h0M360.4 239.1h0M378.8 239.1h0M382.7 239.1h0M383.5 239.1h0M387.0 239.1h0M383.7 239.1h0M390.6 239.1h0M422.3 239.1h0M434.3 239.1h0M454.2 239.1h0M452.2 239.1h0M465.6 239.1h0M472.6 239.1h0M482.9 239.1h0M491.0 239.1h0M491.0 239.1h0M491.0 239.1h0M494.0 239.1h0M495.8 239.1h0M500.2 239.1h0M501.0 239.1h0M509.0 239.1h0M512.1 239.1h0M515.1 239.1h0M519.0 239.1h0M521.3 239.1h0M531.2 239.1h0M532.3 239.1h0M540.3 239.1h0M547.8 239.1h0M563.1 239.1h0M562.5 239.1h0M577.5 239.1h0M586.1 239.1h0M587.3 239.1h0M586.7 239.1h0M590.5 239.1h0M588.9 239.1h0M587.8 239.1h0M603.2 239.1h0M601.2 239.1h0M604.2 239.1h0M615.1 239.1h0M620.2 239.1h0M628.9 239.1h0M643.1 239.1h0M644.5 239.1h0M649.1 239.1h0M652.0 239.1h0M657.3 239.1h0M660.3 239.1h0M663.3 239.1h0M665.7 239.1h0M671.7 239.1h0M677.6 239.1h0M677.0 239.1h0M683.5 239.1h0M697.5 239.1h0M696.3 239.1h0M717.6 239.1h0M722.6 239.1h0M729.8 239.1h0M731.1 239.1h0M742.9 239.1h0M753.8 239.1h0M761.4 239.1h0M762.5 239.1h0M760.3 239.1h0M768.4 239.1h0M778.7 239.1h0M782.6 239.1h0M790.8 239.1h0M792.4 239.1h0M845.9 239.1h0M849.2 239.1h0M861.2 239.1h0M867.7 239.1h0M872.8 239.1h0M873.4 239.1h0M878.9 239.1h0M876.7 239.1h0M894.8 239.1h0M896.0 239.1h0M925.3 239.1h0M936.5 239.1h0M939.9 239.1h0M958.5 239.1h0M979.2 239.1h0M986.4 239.1h0M990.7 239.1h0M990.2 239.1h0M1000.8 239.1h0M1008.7 239.1h0M1030.7 239.1h0M1038.8 239.1h0M1055.2 239.1h0M1051.8 239.1h0M1061.8 239.1h0M1068.4 239.1h0M1067.6 239.1h0M718.1 259.9h0M706.7 257.6h0M703.0 262.2h0M783.8 255.3h0M784.8 262.2h0M780.5 266.8h0M815.9 259.9h0M804.8 264.5h0M808.2 271.4h0M817.1 271.4h0M770.0 276.0h0M780.5 276.0h0M734.1 280.6h0M754.4 280.6h0M730.7 285.2h0M754.4 287.5h0M764.5 285.2h0M767.0 289.8h0M735.1 289.8h0M715.3 292.1h0M711.1 296.8h0M716.8 296.8h0M786.4 289.8h0M793.6 289.8h0M778.7 296.8h0M805.4 294.4h0M805.4 296.8h0M812.7 292.1h0M822.5 289.8h0M828.1 285.2h0M841.9 296.8h0M846.0 294.4h0M853.4 292.1h0M549.5 269.1h0M584.1 273.7h0M592.8 269.1h0M626.9 269.1h0M646.8 269.1h0M658.3 266.8h0M648.3 276.0h0M649.4 278.3h0M602.0 280.6h0M603.8 282.9h0M573.5 285.2h0M655.7 282.9h0M658.9 285.2h0M667.8 280.6h0M682.8 282.9h0M630.5 289.8h0M637.1 292.1h0M665.3 289.8h0M669.5 289.8h0M673.8 289.8h0M583.6 294.4h0M655.4 296.8h0M690.1 296.8h0M677.6 262.2h0M666.0 262.2h0M663.8 262.2h0M310.7 266.8h0M331.4 271.4h0M335.6 273.7h0M339.6 273.7h0M360.8 271.4h0M383.5 269.1h0M383.8 276.0h0M376.5 278.3h0M395.3 276.0h0M432.4 276.0h0M434.2 278.3h0M316.3 282.9h0M325.5 280.6h0M335.6 282.9h0M371.2 282.9h0M382.4 285.2h0M396.8 285.2h0M426.6 285.2h0M436.4 285.2h0" stroke="#fc16f6" stroke-width="4.9" stroke-linecap="round" fill="none"/>
<path d="M377.1 89.2h0M393.3 96.2h0M479.4 87.1h0M467.8 126.1h0M472.7 126.1h0M478.9 163.0h0M312.0 179.1h0M516.5 80.0h0M576.5 73.2h0M592.4 73.2h0M621.3 68.5h0M622.8 77.6h0M617.0 80.0h0M679.5 105.4h0M680.4 112.2h0M579.3 119.3h0M570.9 123.9h0M652.4 126.1h0M628.8 130.7h0M508.5 169.9h0M566.6 174.3h0M620.1 181.6h0M734.4 91.4h0M726.4 123.9h0M731.0 128.5h0M743.4 144.5h0M718.1 172.2h0M726.4 181.6h0M811.6 66.2h0M834.9 68.5h0M842.0 73.2h0M831.4 105.4h0M848.3 103.0h0M861.3 130.7h0M863.5 142.3h0M869.0 142.3h0M847.8 153.7h0M928.4 66.2h0M930.3 77.6h0M910.3 100.8h0M943.2 119.3h0M937.1 144.5h0M926.5 153.7h0M935.5 160.8h0M1007.1 70.8h0M1018.4 70.8h0M1036.8 73.2h0M1070.3 126.1h0M994.4 151.3h0M999.4 149.1h0M1043.3 151.3h0M1024.9 158.3h0M1006.1 181.4h0M994.1 185.9h0M1004.2 188.2h0M1053.4 197.6h0M1053.4 199.9h0M1068.4 218.3h0M1070.9 232.2h0M1005.6 232.2h0M1022.0 236.8h0M969.3 236.8h0M989.0 248.2h0M913.4 273.6h0M1027.1 280.5h0M1002.5 294.3h0M723.4 199.7h0M781.1 195.3h0M817.9 246.0h0M710.4 266.4h0M787.2 278.3h0M871.2 252.8h0M873.5 262.0h0M884.3 280.5h0M863.4 294.3h0M523.9 197.6h0M649.3 202.2h0M545.7 220.5h0M672.0 220.5h0M621.3 255.2h0M521.2 259.8h0M512.0 264.4h0M608.1 264.4h0M643.8 269.0h0M531.6 282.7h0M551.0 282.7h0M671.5 275.9h0M644.1 287.3h0M441.3 188.3h0M497.2 190.7h0M340.0 211.4h0M313.5 218.4h0M480.6 206.8h0M481.6 211.4h0M417.0 225.2h0M473.9 229.8h0M478.4 255.2h0M484.3 264.4h0M335.1 296.5h0M492.7 296.5h0" stroke="#fd9929" stroke-width="5.2" stroke-linecap="round" fill="none"/>
<path d="M334.4 167.5h0M662.5 137.5h0M649.6 158.3h0M772.5 255.2h0M749.2 271.3h0M802.4 278.3h0M739.3 296.5h0M689.0 216.0h0M641.0 234.4h0M666.0 257.4h0M667.8 273.6h0M639.4 289.7h0" stroke="#fc121a" stroke-width="5.2" stroke-linecap="round" fill="none"/>
<circle cx="1162.7" cy="77.7" r="2.6" fill="#0d741a"/>
<circle cx="1162.7" cy="93.9" r="2.6" fill="#fc16f6"/>
<circle cx="1162.7" cy="110.2" r="2.6" fill="#fd9929"/>
<circle cx="1162.7" cy="126.4" r="2.6" fill="#fc121a"/>
</svg>
<span style="position:absolute;white-space:pre;left:515.20px;top:12px;font:400 14.5px/16px 'Liberation Sans';letter-spacing:0.770px;color:#2a3f5f;transform:scaleX(1.13);transform-origin:0 0;">stm32f2-bootloader-memread-crowbar.py_20250418_224743</span>
<span style="position:absolute;white-space:pre;left:235.80px;top:84px;font:400 11px/12px 'Liberation Sans';letter-spacing:-0.507px;color:#2a3f5f;transform:scaleX(1.13);transform-origin:0 0;">200</span>
<span style="position:absolute;white-space:pre;left:235.80px;top:130px;font:400 11px/12px 'Liberation Sans';letter-spacing:-0.507px;color:#2a3f5f;transform:scaleX(1.13);transform-origin:0 0;">180</span>
<span style="position:absolute;white-space:pre;left:235.80px;top:176px;font:400 11px/12px 'Liberation Sans';letter-spacing:-0.507px;color:#2a3f5f;transform:scaleX(1.13);transform-origin:0 0;">160</span>
<span style="position:absolute;white-space:pre;left:235.80px;top:222px;font:400 11px/12px 'Liberation Sans';letter-spacing:-0.507px;color:#2a3f5f;transform:scaleX(1.13);transform-origin:0 0;">140</span>
<span style="position:absolute;white-space:pre;left:235.80px;top:268px;font:400 11px/12px 'Liberation Sans';letter-spacing:-0.507px;color:#2a3f5f;transform:scaleX(1.13);transform-origin:0 0;">120</span>
<span style="position:absolute;white-space:pre;left:293.70px;top:315px;font:400 11px/12px 'Liberation Sans';letter-spacing:-0.025px;color:#2a3f5f;transform:scaleX(1.13);transform-origin:0 0;">95k</span>
<span style="position:absolute;white-space:pre;left:484.30px;top:315px;font:400 11px/12px 'Liberation Sans';letter-spacing:-0.077px;color:#2a3f5f;transform:scaleX(1.13);transform-origin:0 0;">100k</span>
<span style="position:absolute;white-space:pre;left:678.85px;top:315px;font:400 11px/12px 'Liberation Sans';letter-spacing:-0.077px;color:#2a3f5f;transform:scaleX(1.13);transform-origin:0 0;">105k</span>
<span style="position:absolute;white-space:pre;left:873.40px;top:315px;font:400 11px/12px 'Liberation Sans';letter-spacing:0.194px;color:#2a3f5f;transform:scaleX(1.13);transform-origin:0 0;">110k</span>
<span style="position:absolute;white-space:pre;left:1067.95px;top:315px;font:400 11px/12px 'Liberation Sans';letter-spacing:0.194px;color:#2a3f5f;transform:scaleX(1.13);transform-origin:0 0;">115k</span>
<span style="position:absolute;white-space:pre;left:675.20px;top:337px;font:400 12.5px/14px 'Liberation Sans';letter-spacing:0.182px;color:#2a3f5f;transform:scaleX(1.13);transform-origin:0 0;">delay</span>
<div class="abs" style="left:218.9px;top:201.5px;width:0;height:0;transform:rotate(-90deg);transform-origin:0 0"><span style="position:absolute;white-space:pre;left:0.00px;top:-11px;font:400 12.5px/14px 'Liberation Sans';letter-spacing:0.249px;color:#2a3f5f;transform:scaleX(1.13);transform-origin:0 0;">length</span></div>
<span style="position:absolute;white-space:pre;left:1147.80px;top:55px;font:400 12.2px/14px 'Liberation Sans';letter-spacing:0.545px;color:#2a3f5f;transform:scaleX(1.13);transform-origin:0 0;">Classification (80,071)</span>
<span style="position:absolute;white-space:pre;left:1179.60px;top:73px;font:400 10px/11px 'Liberation Sans';letter-spacing:0.963px;color:#2a3f5f;transform:scaleX(1.13);transform-origin:0 0;">None ( 41478 / 51.8% )</span>
<span style="position:absolute;white-space:pre;left:1179.60px;top:89px;font:400 10px/11px 'Liberation Sans';letter-spacing:0.963px;color:#2a3f5f;transform:scaleX(1.13);transform-origin:0 0;">None ( 38481 / 48.1% )</span>
<span style="position:absolute;white-space:pre;left:1179.60px;top:106px;font:400 10px/11px 'Liberation Sans';letter-spacing:0.984px;color:#2a3f5f;transform:scaleX(1.13);transform-origin:0 0;">None ( 100 / 0.1% )</span>
<span style="position:absolute;white-space:pre;left:1179.60px;top:122px;font:400 10px/11px 'Liberation Sans';letter-spacing:0.999px;color:#2a3f5f;transform:scaleX(1.13);transform-origin:0 0;">None ( 12 / 0.0% )</span>
<span style="position:absolute;white-space:pre;left:45.80px;top:383px;font:400 13.5px/15px 'Liberation Sans';letter-spacing:0.587px;color:#4b4b4b;">re.search(*, response)</span>
<div class="inp" style="left:46.3px;top:415.4px;width:214.75px;height:23.5px"></div>
<div class="inp" style="left:261.1px;top:415.4px;width:142.75px;height:23.5px"></div>
<div class="inp" style="left:403.8px;top:415.4px;width:214.75px;height:23.5px"></div>
<div class="inp" style="left:618.5px;top:415.4px;width:142.75px;height:23.5px"></div>
<div class="inp" style="left:761.3px;top:415.4px;width:214.75px;height:23.5px"></div>
<div class="inp" style="left:976.0px;top:415.4px;width:142.75px;height:23.5px"></div>
<div class="inp" style="left:1118.8px;top:415.4px;width:214.75px;height:23.5px"></div>
<div class="inp" style="left:1333.5px;top:415.4px;width:142.75px;height:23.5px"></div>
<div class="inp" style="left:46.3px;top:438.9px;width:214.75px;height:24.0px"></div>
<div class="inp" style="left:261.1px;top:438.9px;width:142.75px;height:24.0px"></div>
<div class="inp" style="left:403.8px;top:438.9px;width:214.75px;height:24.0px"></div>
<div class="inp" style="left:618.5px;top:438.9px;width:142.75px;height:24.0px"></div>
<div class="inp" style="left:761.3px;top:438.9px;width:214.75px;height:24.0px"></div>
<div class="inp" style="left:976.0px;top:438.9px;width:142.75px;height:24.0px"></div>
<div class="inp" style="left:1118.8px;top:438.9px;width:214.75px;height:24.0px"></div>
<div class="inp" style="left:1333.5px;top:438.9px;width:142.75px;height:24.0px"></div>
<span style="position:absolute;white-space:pre;left:47.80px;top:420px;font:400 13.5px/15px 'Liberation Sans';letter-spacing:-0.183px;color:#a4a4a4;">green</span>
<span style="position:absolute;white-space:pre;left:262.55px;top:420px;font:400 13.5px/15px 'Liberation Sans';letter-spacing:0.295px;color:#a4a4a4;">green-label</span>
<span style="position:absolute;white-space:pre;left:405.30px;top:420px;font:400 13.5px/15px 'Liberation Sans';letter-spacing:0.557px;color:#a4a4a4;">yellow</span>
<span style="position:absolute;white-space:pre;left:620.05px;top:420px;font:400 13.5px/15px 'Liberation Sans';letter-spacing:0.559px;color:#a4a4a4;">yellow-label</span>
<span style="position:absolute;white-space:pre;left:762.80px;top:420px;font:400 13.5px/15px 'Liberation Sans';letter-spacing:0.042px;color:#a4a4a4;">magenta</span>
<span style="position:absolute;white-space:pre;left:977.55px;top:420px;font:400 13.5px/15px 'Liberation Sans';letter-spacing:0.320px;color:#a4a4a4;">magenta-label</span>
<span style="position:absolute;white-space:pre;left:1120.30px;top:420px;font:400 13.5px/15px 'Liberation Sans';letter-spacing:-0.089px;color:#a4a4a4;">orange</span>
<span style="position:absolute;white-space:pre;left:1335.05px;top:420px;font:400 13.5px/15px 'Liberation Sans';letter-spacing:0.340px;color:#a4a4a4;">orange-label</span>
<span style="position:absolute;white-space:pre;left:47.80px;top:444px;font:400 13.5px/15px 'Liberation Sans';letter-spacing:-0.410px;color:#a4a4a4;">cyan</span>
<span style="position:absolute;white-space:pre;left:262.55px;top:444px;font:400 13.5px/15px 'Liberation Sans';letter-spacing:0.273px;color:#a4a4a4;">cyan-label</span>
<span style="position:absolute;white-space:pre;left:405.30px;top:444px;font:400 13.5px/15px 'Liberation Sans';letter-spacing:0.190px;color:#a4a4a4;">blue</span>
<span style="position:absolute;white-space:pre;left:620.05px;top:444px;font:400 13.5px/15px 'Liberation Sans';letter-spacing:0.428px;color:#a4a4a4;">blue-label</span>
<span style="position:absolute;white-space:pre;left:762.80px;top:444px;font:400 13.5px/15px 'Liberation Sans';letter-spacing:0.096px;color:#a4a4a4;">black</span>
<span style="position:absolute;white-space:pre;left:977.55px;top:444px;font:400 13.5px/15px 'Liberation Sans';letter-spacing:0.305px;color:#a4a4a4;">black-label</span>
<span style="position:absolute;white-space:pre;left:1120.30px;top:444px;font:400 13.5px/15px 'Liberation Sans';letter-spacing:-0.408px;color:#a4a4a4;">red</span>
<span style="position:absolute;white-space:pre;left:1335.05px;top:444px;font:400 13.5px/15px 'Liberation Sans';letter-spacing:0.421px;color:#a4a4a4;">red-label</span>
<span style="position:absolute;white-space:pre;left:46.40px;top:465px;font:400 13.5px/15px 'Liberation Sans';letter-spacing:0.586px;color:#4b4b4b;">Combine data?</span>
<div class="abs" style="left:45.9px;top:489px;width:10.4px;height:10.4px;border-radius:50%;background:#1a73ff;"></div>
<div class="abs" style="left:49.3px;top:492.4px;width:3.6px;height:3.6px;border-radius:50%;background:#fff;"></div>
<div class="abs" style="left:79.2px;top:489.8px;width:9.4px;height:9.4px;box-sizing:border-box;border-radius:50%;background:#fafafa;border:1px solid #cfcfcf"></div>
<span style="position:absolute;white-space:pre;left:56.80px;top:485px;font:400 13.5px/15px 'Liberation Sans';letter-spacing:-0.566px;color:#4b4b4b;">Yes</span>
<span style="position:absolute;white-space:pre;left:89.90px;top:485px;font:400 13.5px/15px 'Liberation Sans';letter-spacing:-0.166px;color:#4b4b4b;">No</span>
<div class="abs" style="left:46px;top:503px;width:1430px;height:321.5px;overflow:hidden">
<div class="abs" style="left:0;top:0;width:1430px;height:51.5px;background:#fafafa"></div>
<div class="abs" style="left:0;top:51.5px;width:1430px;height:25.5px;background:#0d741a"></div>
<div class="abs" style="left:0;top:77.0px;width:1430px;height:25.5px;background:#fc16f6"></div>
<div class="abs" style="left:0;top:102.5px;width:1430px;height:25.5px;background:#fd9929"></div>
<div class="abs" style="left:0;top:128.0px;width:1430px;height:25.5px;background:#fc121a"></div>
<div class="abs" style="left:0;top:153.5px;width:1430px;height:25.5px;background:#fc121a"></div>
<div class="abs" style="left:0;top:179.0px;width:1430px;height:25.5px;background:#fc121a"></div>
<div class="abs" style="left:0;top:204.5px;width:1430px;height:25.5px;background:#fd9929"></div>
<div class="abs" style="left:0;top:230.0px;width:1430px;height:25.5px;background:#fc121a"></div>
<div class="abs" style="left:0;top:255.5px;width:1430px;height:25.5px;background:#fc121a"></div>
<div class="abs" style="left:0;top:281.0px;width:1430px;height:25.5px;background:#fc121a"></div>
<svg class="abs" style="left:0;top:0" width="1430" height="307" viewBox="0 0 1430 307"><defs>
<pattern id="fd" x="701.28" y="0.5" width="9.04" height="25.5" patternUnits="userSpaceOnUse">
<path d="M4.52 4.5L8.22 7.9V14.7L4.52 18.1L0.82 14.7V7.9Z" fill="#fff"/>
<path d="M2.7 8.6Q2.8 7.3 4.5 7.3Q6.6 7.4 6.3 9Q6 10.2 4.9 11.4Q4.2 12.3 4.1 13.6" stroke="#fc121a" stroke-width="0.85" fill="none"/><circle cx="4" cy="15.6" r="0.65" fill="#fc121a"/>
</pattern></defs>
<g transform="translate(0 153.5)"><rect x="701" y="0" width="729" height="25.5" fill="url(#fd)"/></g>
<g transform="translate(0 281.0)"><rect x="701" y="0" width="729" height="25.5" fill="url(#fd)"/></g>
</svg>
<div class="hl" style="left:0;top:0.0px;width:1430px"></div>
<div class="hl" style="left:0;top:25.5px;width:1430px"></div>
<div class="hl" style="left:0;top:51.0px;width:1430px"></div>
<div class="hl" style="left:0;top:76.5px;width:1430px"></div>
<div class="hl" style="left:0;top:102.0px;width:1430px"></div>
<div class="hl" style="left:0;top:127.5px;width:1430px"></div>
<div class="hl" style="left:0;top:153.0px;width:1430px"></div>
<div class="hl" style="left:0;top:178.5px;width:1430px"></div>
<div class="hl" style="left:0;top:204.0px;width:1430px"></div>
<div class="hl" style="left:0;top:229.5px;width:1430px"></div>
<div class="hl" style="left:0;top:255.0px;width:1430px"></div>
<div class="hl" style="left:0;top:280.5px;width:1430px"></div>
<div class="hl" style="left:0;top:306.0px;width:1430px"></div>
<div class="vl" style="left:0.0px;top:0;height:306.5px"></div>
<div class="vl" style="left:85.0px;top:0;height:306.5px"></div>
<div class="vl" style="left:170.0px;top:0;height:306.5px"></div>
<div class="vl" style="left:255.0px;top:0;height:306.5px"></div>
<div class="vl" style="left:340.0px;top:0;height:306.5px"></div>
<div class="vl" style="left:425.0px;top:0;height:306.5px"></div>
<div class="vl" style="left:510.0px;top:0;height:306.5px"></div>
<div class="h" style="left:11.5px;top:8px;width:72px">AMOUNT</div>
<div class="h" style="left:96.5px;top:8px;width:72px">COLOR</div>
<div class="h" style="left:181.5px;top:8px;width:72px">YMIN</div>
<div class="h" style="left:266.5px;top:8px;width:72px">YMAX</div>
<div class="h" style="left:351.5px;top:8px;width:72px">XMIN</div>
<div class="h" style="left:436.5px;top:8px;width:72px">XMAX</div>
<div class="h" style="left:521.1px;top:8px;text-align:left">RESPONSE</div>
<svg class="abs" style="left:0;top:0" width="600" height="26" viewBox="0 0 600 26"><path fill="#a9a9a9" d="M3.3 12.3h8.2l-4.1-4.9zM3.3 13.9h8.2l-4.1 4.7zM88.3 12.3h8.2l-4.1-4.9zM88.3 13.9h8.2l-4.1 4.7zM173.3 12.3h8.2l-4.1-4.9zM173.3 13.9h8.2l-4.1 4.7zM258.3 12.3h8.2l-4.1-4.9zM258.3 13.9h8.2l-4.1 4.7zM343.3 12.3h8.2l-4.1-4.9zM343.3 13.9h8.2l-4.1 4.7zM428.3 12.3h8.2l-4.1-4.9zM428.3 13.9h8.2l-4.1 4.7zM512.9 12.3h8.2l-4.1-4.9zM512.9 13.9h8.2l-4.1 4.7z"/></svg>
<div class="abs" style="left:3.1px;top:32.3px;width:13.6px;height:13.7px;box-sizing:border-box;border:1px solid #fbe2e7;border-radius:3px;font:400 7.5px/11px 'Liberation Serif';color:#fbe0e6;text-align:center;letter-spacing:0">Aa</div>
<div class="abs" style="left:88.1px;top:32.3px;width:13.6px;height:13.7px;box-sizing:border-box;border:1px solid #fbe2e7;border-radius:3px;font:400 7.5px/11px 'Liberation Serif';color:#fbe0e6;text-align:center;letter-spacing:0">Aa</div>
<div class="abs" style="left:173.1px;top:32.3px;width:13.6px;height:13.7px;box-sizing:border-box;border:1px solid #fbe2e7;border-radius:3px;font:400 7.5px/11px 'Liberation Serif';color:#fbe0e6;text-align:center;letter-spacing:0">Aa</div>
<div class="abs" style="left:258.1px;top:32.3px;width:13.6px;height:13.7px;box-sizing:border-box;border:1px solid #fbe2e7;border-radius:3px;font:400 7.5px/11px 'Liberation Serif';color:#fbe0e6;text-align:center;letter-spacing:0">Aa</div>
<div class="abs" style="left:343.1px;top:32.3px;width:13.6px;height:13.7px;box-sizing:border-box;border:1px solid #fbe2e7;border-radius:3px;font:400 7.5px/11px 'Liberation Serif';color:#fbe0e6;text-align:center;letter-spacing:0">Aa</div>
<div class="abs" style="left:428.1px;top:32.3px;width:13.6px;height:13.7px;box-sizing:border-box;border:1px solid #fbe2e7;border-radius:3px;font:400 7.5px/11px 'Liberation Serif';color:#fbe0e6;text-align:center;letter-spacing:0">Aa</div>
<div class="abs" style="left:513.1px;top:32.3px;width:13.6px;height:13.7px;box-sizing:border-box;border:1px solid #fbe2e7;border-radius:3px;font:400 7.5px/11px 'Liberation Serif';color:#fbe0e6;text-align:center;letter-spacing:0">Aa</div>
<div class="abs" style="left:17.4px;top:34px;width:65.4px;overflow:hidden;white-space:pre;font:700 9.5px/11px 'Liberation Mono';letter-spacing:.77px;color:#3a3a3a">filter data...</div>
<div class="c" style="left:0.5px;top:59px">41478</div>
<div class="c" style="left:85.5px;top:59px">G</div>
<div class="c" style="left:170.5px;top:59px">110</div>
<div class="c" style="left:255.5px;top:59px">210</div>
<div class="c" style="left:340.5px;top:59px">95000</div>
<div class="c" style="left:425.5px;top:59px">115000</div>
<div class="r" style="top:59px">expected: RDP active</div>
<div class="c" style="left:0.5px;top:84px">38481</div>
<div class="c" style="left:85.5px;top:84px">M</div>
<div class="c" style="left:170.5px;top:84px">110</div>
<div class="c" style="left:255.5px;top:84px">210</div>
<div class="c" style="left:340.5px;top:84px">95000</div>
<div class="c" style="left:425.5px;top:84px">114998</div>
<div class="r" style="top:84px">error: no response</div>
<div class="c" style="left:0.5px;top:110px">99</div>
<div class="c" style="left:85.5px;top:110px">O</div>
<div class="c" style="left:170.5px;top:110px">110</div>
<div class="c" style="left:255.5px;top:110px">210</div>
<div class="c" style="left:340.5px;top:110px">95214</div>
<div class="c" style="left:425.5px;top:110px">114734</div>
<div class="r" style="top:110px">warning: timeout</div>
<div class="c" style="left:0.5px;top:135px">4</div>
<div class="c" style="left:85.5px;top:135px">R</div>
<div class="c" style="left:170.5px;top:135px">137</div>
<div class="c" style="left:255.5px;top:135px">179</div>
<div class="c" style="left:340.5px;top:135px">95789</div>
<div class="c" style="left:425.5px;top:135px">104228</div>
<div class="r" style="top:135px">success: RDP inactive</div>
<div class="c" style="left:0.5px;top:161px">3</div>
<div class="c" style="left:85.5px;top:161px">R</div>
<div class="c" style="left:170.5px;top:161px">121</div>
<div class="c" style="left:255.5px;top:161px">145</div>
<div class="c" style="left:340.5px;top:161px">104911</div>
<div class="c" style="left:425.5px;top:161px">107059</div>
<div class="r" style="top:161px">success: RDP inactive</div>
<div class="c" style="left:0.5px;top:186px">2</div>
<div class="c" style="left:85.5px;top:186px">R</div>
<div class="c" style="left:170.5px;top:186px">110</div>
<div class="c" style="left:255.5px;top:186px">113</div>
<div class="c" style="left:340.5px;top:186px">103634</div>
<div class="c" style="left:425.5px;top:186px">106205</div>
<div class="r" style="top:186px">success: RDP inactive1y</div>
<div class="c" style="left:0.5px;top:212px">1</div>
<div class="c" style="left:85.5px;top:212px">O</div>
<div class="c" style="left:170.5px;top:212px">151</div>
<div class="c" style="left:255.5px;top:212px">151</div>
<div class="c" style="left:340.5px;top:212px">103886</div>
<div class="c" style="left:425.5px;top:212px">103886</div>
<div class="r" style="top:212px">error: successive error occurred</div>
<div class="c" style="left:0.5px;top:237px">1</div>
<div class="c" style="left:85.5px;top:237px">R</div>
<div class="c" style="left:170.5px;top:237px">118</div>
<div class="c" style="left:255.5px;top:237px">118</div>
<div class="c" style="left:340.5px;top:237px">107827</div>
<div class="c" style="left:425.5px;top:237px">107827</div>
<div class="r" style="top:237px">success: RDP inactivey<span class="bx"></span>y1y</div>
<div class="c" style="left:0.5px;top:263px">1</div>
<div class="c" style="left:85.5px;top:263px">R</div>
<div class="c" style="left:170.5px;top:263px">120</div>
<div class="c" style="left:255.5px;top:263px">120</div>
<div class="c" style="left:340.5px;top:263px">104367</div>
<div class="c" style="left:425.5px;top:263px">104367</div>
<div class="r" style="top:263px">success: RDP inactive<span class="bx"></span>y<span class="bx"></span>y1y</div>
<div class="c" style="left:0.5px;top:288px">1</div>
<div class="c" style="left:85.5px;top:288px">R</div>
<div class="c" style="left:170.5px;top:288px">127</div>
<div class="c" style="left:255.5px;top:288px">127</div>
<div class="c" style="left:340.5px;top:288px">104316</div>
<div class="c" style="left:425.5px;top:288px">104316</div>
<div class="r" style="top:288px">success: RDP inactive</div>
<div class="abs" style="left:0;top:307.0px;width:1430px;height:14.5px;background:#fafafa;border-bottom:1px solid #e8e8e8;box-sizing:border-box"></div>
<div class="abs" style="left:3.2px;top:310.6px;width:192.6px;height:8.6px;border-radius:4.3px;background:#c1c1c1"></div>
</div>
<span style="position:absolute;white-space:pre;left:46.50px;top:827px;font:400 13.5px/15px 'Liberation Sans';letter-spacing:0.975px;color:#4b4b4b;">Arguments:--rpico</span>
<span style="position:absolute;white-space:pre;left:174.60px;top:827px;font:400 13.5px/15px 'Liberation Sans';letter-spacing:0.995px;color:#4b4b4b;">/dev/tty.usbmodem1401</span>
<span style="position:absolute;white-space:pre;left:344.60px;top:827px;font:400 13.5px/15px 'Liberation Sans';letter-spacing:1.188px;color:#4b4b4b;">--length</span>
<span style="position:absolute;white-space:pre;left:405.80px;top:827px;font:400 13.5px/15px 'Liberation Sans';letter-spacing:0.784px;color:#4b4b4b;">100</span>
<span style="position:absolute;white-space:pre;left:436.40px;top:827px;font:400 13.5px/15px 'Liberation Sans';letter-spacing:1.334px;color:#4b4b4b;">400</span>
<span style="position:absolute;white-space:pre;left:468.10px;top:827px;font:400 13.5px/15px 'Liberation Sans';letter-spacing:1.139px;color:#4b4b4b;">--delay</span>
<span style="position:absolute;white-space:pre;left:522.70px;top:827px;font:400 13.5px/15px 'Liberation Sans';letter-spacing:1.023px;color:#4b4b4b;">175_000</span>
<span style="position:absolute;white-space:pre;left:588.40px;top:827px;font:400 13.5px/15px 'Liberation Sans';letter-spacing:1.206px;color:#4b4b4b;">190_000</span>
<span style="position:absolute;white-space:pre;left:654.70px;top:827px;font:400 13.5px/15px 'Liberation Sans';letter-spacing:1.212px;color:#4b4b4b;">--target</span>
<span style="position:absolute;white-space:pre;left:711.90px;top:827px;font:400 13.5px/15px 'Liberation Sans';letter-spacing:1.005px;color:#4b4b4b;">/dev/tty.usbmodem1103</span>
<span style="position:absolute;white-space:pre;left:881.10px;top:827px;font:400 13.5px/15px 'Liberation Sans';letter-spacing:1.117px;color:#4b4b4b;">--delay2</span>
<span style="position:absolute;white-space:pre;left:944.20px;top:827px;font:400 13.5px/15px 'Liberation Sans';letter-spacing:1.127px;color:#4b4b4b;">95_000</span>
<span style="position:absolute;white-space:pre;left:1002.20px;top:827px;font:400 13.5px/15px 'Liberation Sans';letter-spacing:1.156px;color:#4b4b4b;">115_000</span>
<span style="position:absolute;white-space:pre;left:1067.70px;top:827px;font:400 13.5px/15px 'Liberation Sans';letter-spacing:1.200px;color:#4b4b4b;">--length2</span>
<span style="position:absolute;white-space:pre;left:1137.90px;top:827px;font:400 13.5px/15px 'Liberation Sans';letter-spacing:0.934px;color:#4b4b4b;">110</span>
<span style="position:absolute;white-space:pre;left:1169.00px;top:827px;font:400 13.5px/15px 'Liberation Sans';letter-spacing:0.834px;color:#4b4b4b;">210</span>
</body></html>
